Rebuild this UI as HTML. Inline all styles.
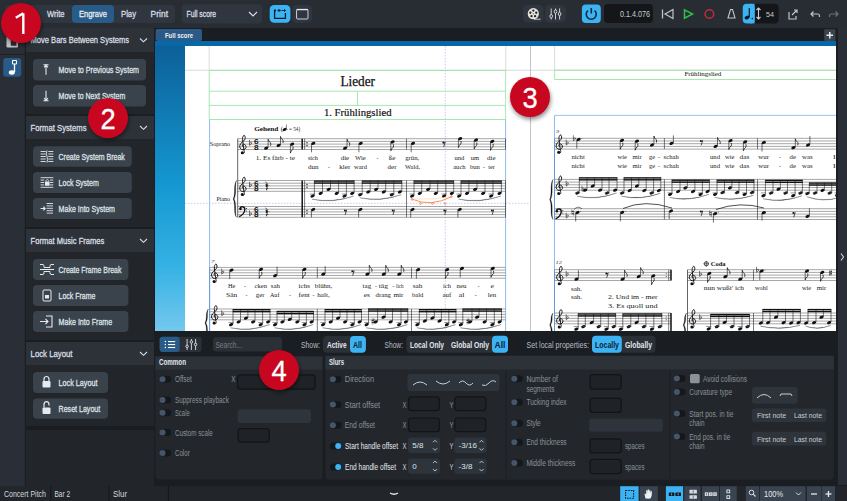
<!DOCTYPE html><html><head><meta charset="utf-8"><style>html,body{margin:0;padding:0;background:#1a1d21;overflow:hidden}svg{display:block}</style></head><body><svg width="847" height="501" viewBox="0 0 847 501"><defs><filter id="blur" x="-50%" y="-50%" width="200%" height="200%"><feGaussianBlur stdDeviation="2.2"/></filter></defs>
<rect x="0" y="0" width="847" height="501" rx="0" fill="#1a1d21" />
<rect x="0" y="0" width="847" height="28" rx="0" fill="#282c33" />
<rect x="5" y="5" width="170" height="18" rx="4" fill="#2f3640" />
<rect x="72" y="5" width="42" height="18" rx="4" fill="#285b88" />
<text x="47" y="17.2" font-family='"Liberation Sans",sans-serif' font-size="9.2" fill="#d9dee3" stroke="#d9dee3" stroke-width="0.3" textLength="17.60" lengthAdjust="spacingAndGlyphs" >Write</text>
<text x="79" y="17.2" font-family='"Liberation Sans",sans-serif' font-size="9.2" fill="#e8ecef" stroke="#e8ecef" stroke-width="0.3" textLength="28.00" lengthAdjust="spacingAndGlyphs" >Engrave</text>
<text x="121" y="17.2" font-family='"Liberation Sans",sans-serif' font-size="9.2" fill="#d9dee3" stroke="#d9dee3" stroke-width="0.3" textLength="15.00" lengthAdjust="spacingAndGlyphs" >Play</text>
<text x="150.6" y="17.2" font-family='"Liberation Sans",sans-serif' font-size="9.2" fill="#d9dee3" stroke="#d9dee3" stroke-width="0.3" textLength="17.40" lengthAdjust="spacingAndGlyphs" >Print</text>
<rect x="181.7" y="4.2" width="80.5" height="19.4" rx="4" fill="#2f3640" />
<text x="186.5" y="17" font-family='"Liberation Sans",sans-serif' font-size="9.2" fill="#d9dee3" stroke="#d9dee3" stroke-width="0.3" textLength="29.50" lengthAdjust="spacingAndGlyphs" >Full score</text>
<path d="M249,12 L253,16 L257,12" fill="none" stroke="#d9dee3" stroke-width="1.2" />
<rect x="269.7" y="5" width="20.7" height="17.7" rx="4.5" fill="#3cb4f3" />
<path d="M274.6,10.6 L274.6,18.4 L285.4,18.4 L285.4,13" fill="none" stroke="#0d1b26" stroke-width="1.3" />
<rect x="273.9" y="9.6" width="2.2" height="1.8" rx="0.6" fill="#0d1b26" />
<rect x="277.6" y="9.6" width="3" height="1.8" rx="0.6" fill="#0d1b26" />
<path d="M281.5,10.5 L285.5,10.5 M284.3,9.3 L285.5,10.5 L284.3,11.7" fill="none" stroke="#0d1b26" stroke-width="0.9" />
<rect x="292.2" y="5" width="19.8" height="17.7" rx="4.5" fill="#2f3640" />
<rect x="296.6" y="9.4" width="11.4" height="9.6" rx="1" fill="none" stroke="#cfd4d9" stroke-width="1"/>
<line x1="296.6" y1="9.6" x2="308" y2="9.6" stroke="#e6e9ec" stroke-width="1.3" />
<rect x="523" y="5" width="20.7" height="17.5" rx="4.5" fill="#2f3640" />
<circle cx="533.3" cy="13.7" r="5.6" fill="#e6e2dc" stroke="none" stroke-width="1" />
<circle cx="533.3" cy="10.6" r="1.15" fill="#1e2329" stroke="none" stroke-width="1" />
<circle cx="536.25" cy="12.75" r="1.15" fill="#1e2329" stroke="none" stroke-width="1" />
<circle cx="535.0999999999999" cy="16.2" r="1.15" fill="#1e2329" stroke="none" stroke-width="1" />
<circle cx="531.5" cy="16.2" r="1.15" fill="#1e2329" stroke="none" stroke-width="1" />
<circle cx="530.3499999999999" cy="12.75" r="1.15" fill="#1e2329" stroke="none" stroke-width="1" />
<circle cx="533.3" cy="13.7" r="0.5" fill="#1e2329" stroke="none" stroke-width="1" />
<line x1="534" y1="19.2" x2="540.5" y2="19.2" stroke="#e6e2dc" stroke-width="0.9" />
<rect x="545" y="5" width="20.8" height="17.5" rx="4.5" fill="#2f3640" />
<line x1="551.2" y1="8.5" x2="551.2" y2="19.5" stroke="#e6e2dc" stroke-width="0.9" />
<ellipse cx="551.2" cy="16.2" rx="1.3" ry="1.7" fill="#2e343b" stroke="#e6e2dc" stroke-width="0.9"/>
<line x1="555.5" y1="8.5" x2="555.5" y2="19.5" stroke="#e6e2dc" stroke-width="0.9" />
<ellipse cx="555.5" cy="11.6" rx="1.3" ry="1.7" fill="#2e343b" stroke="#e6e2dc" stroke-width="0.9"/>
<line x1="559.6" y1="8.5" x2="559.6" y2="19.5" stroke="#e6e2dc" stroke-width="0.9" />
<ellipse cx="559.6" cy="14" rx="1.3" ry="1.7" fill="#2e343b" stroke="#e6e2dc" stroke-width="0.9"/>
<rect x="581.9" y="4.6" width="18.9" height="18.4" rx="4" fill="#3cb4f3" />
<path d="M588,10.5 A5,5 0 1 0 594.5,10.5" fill="none" stroke="#0f2a40" stroke-width="1.6" />
<line x1="591.3" y1="8" x2="591.3" y2="13.5" stroke="#0f2a40" stroke-width="1.6" />
<rect x="604" y="4" width="49" height="19" rx="4" fill="#141619" />
<text x="620" y="16.7" font-family='"Liberation Sans",sans-serif' font-size="8.5" fill="#c8ced4" textLength="30.00" lengthAdjust="spacingAndGlyphs" >0.1.4.076</text>
<line x1="662.5" y1="9.5" x2="662.5" y2="18.5" stroke="#c0c5ca" stroke-width="1.3" />
<path d="M673,9.5 L665,14 L673,18.5 Z" fill="none" stroke="#c0c5ca" stroke-width="1.2" />
<path d="M684.5,9.8 L692.5,14 L684.5,18.2 Z" fill="none" stroke="#2fc24a" stroke-width="1.5" />
<circle cx="709.4" cy="14" r="4.3" fill="none" stroke="#c62b35" stroke-width="1.5" />
<path d="M728,18 L730.5,9.5 L732.5,9.5 L735,18 Z" fill="none" stroke="#c0c5ca" stroke-width="1.1" />
<rect x="742.7" y="3.8" width="36" height="19.6" rx="4" fill="#141619" />
<rect x="742.7" y="3.8" width="11.9" height="19.6" rx="4" fill="#3cb4f3" />
<rect x="750" y="3.8" width="4.6" height="19.6" rx="0" fill="#3cb4f3" />
<path d="M749.3,8 L749.3,17.2" fill="none" stroke="#0d1b26" stroke-width="1.2" />
<ellipse cx="747" cy="17.6" rx="2.5" ry="1.8" transform="rotate(-20 747 17.6)" fill="#0d1b26"/>
<circle cx="752.3" cy="18.6" r="0.8" fill="#0d1b26" stroke="none" stroke-width="1" />
<line x1="758.5" y1="8" x2="758.5" y2="19" stroke="#c8ced4" stroke-width="1.1" />
<path d="M756.5,10 L758.5,8 L760.5,10 M756.5,17 L758.5,19 L760.5,17" fill="none" stroke="#c8ced4" stroke-width="1.1" />
<text x="766" y="16.5" font-family='"Liberation Sans",sans-serif' font-size="8" fill="#c8ced4" textLength="8.00" lengthAdjust="spacingAndGlyphs" >54</text>
<path d="M789,12 L789,19 L796,19 L796,16" fill="none" stroke="#c0c5ca" stroke-width="1.2" />
<path d="M792,15 L797,10 M794,10 L797,10 L797,13" fill="none" stroke="#c0c5ca" stroke-width="1.2" />
<path d="M811,14 L818,14 Q819.5,14 819.5,16 L819.5,17 M813.5,11.5 L811,14 L813.5,16.5" fill="none" stroke="#c0c5ca" stroke-width="1.2" />
<path d="M838,14 L831,14 Q829.5,14 829.5,16 L829.5,17 M835.5,11.5 L838,14 L835.5,16.5" fill="none" stroke="#6c737a" stroke-width="1.2" />
<rect x="0" y="28" width="25" height="459" rx="0" fill="#2a2f37" />
<line x1="0" y1="54.4" x2="25" y2="54.4" stroke="#1d2125" stroke-width="1" />
<rect x="3.2" y="58" width="18" height="18.8" rx="3" fill="#285b88" />
<rect x="12.5" y="60.5" width="4" height="3.5" rx="0.5" fill="none" stroke="#fff" stroke-width="1.1"/>
<line x1="14.5" y1="64" x2="14.5" y2="72" stroke="#fff" stroke-width="1.3" />
<ellipse cx="11.8" cy="72.5" rx="3" ry="2.2" fill="#fff"/>
<rect x="6.5" y="36" width="11.5" height="11.5" rx="1.2" fill="#bfc3c7" />
<rect x="10.8" y="39.2" width="5.6" height="6.6" rx="0.5" fill="#2a2f37" />
<line x1="25.3" y1="28" x2="25.3" y2="487" stroke="#1b1e22" stroke-width="1" />
<rect x="26" y="28" width="128" height="459" rx="0" fill="#22262b" />
<rect x="26" y="28" width="128" height="24" rx="0" fill="#2d3239" />
<text x="30.6" y="43.2" font-family='"Liberation Sans",sans-serif' font-size="9.2" fill="#d9dee3" stroke="#d9dee3" stroke-width="0.3" textLength="98.40" lengthAdjust="spacingAndGlyphs" >Move Bars Between Systems</text>
<path d="M140,38.5 L143.5,41.8 L147,38.5" fill="none" stroke="#d9dee3" stroke-width="1.1" />
<rect x="33" y="59" width="113" height="21.599999999999994" rx="4" fill="#3a424b" />
<text x="58.6" y="73.1" font-family='"Liberation Sans",sans-serif' font-size="9.2" fill="#dfe3e7" stroke="#dfe3e7" stroke-width="0.3" textLength="80.40" lengthAdjust="spacingAndGlyphs" >Move to Previous System</text>
<line x1="46" y1="64.8" x2="46" y2="74.8" stroke="#e6eaee" stroke-width="1.1" />
<line x1="43.5" y1="64.8" x2="48.5" y2="64.8" stroke="#e6eaee" stroke-width="1.1" />
<path d="M44,67.3 L46,65.3 L48,67.3" fill="none" stroke="#e6eaee" stroke-width="1.1" />
<rect x="33" y="85" width="113" height="21.400000000000006" rx="4" fill="#3a424b" />
<text x="58.6" y="99.0" font-family='"Liberation Sans",sans-serif' font-size="9.2" fill="#dfe3e7" stroke="#dfe3e7" stroke-width="0.3" textLength="66.70" lengthAdjust="spacingAndGlyphs" >Move to Next System</text>
<line x1="46" y1="90.7" x2="46" y2="100.7" stroke="#e6eaee" stroke-width="1.1" />
<line x1="43.5" y1="100.7" x2="48.5" y2="100.7" stroke="#e6eaee" stroke-width="1.1" />
<path d="M44,98.2 L46,100.2 L48,98.2" fill="none" stroke="#e6eaee" stroke-width="1.1" />
<rect x="26" y="114" width="128" height="2" rx="0" fill="#1a1d21" />
<rect x="26" y="116" width="128" height="23" rx="0" fill="#2d3239" />
<text x="30.6" y="130.7" font-family='"Liberation Sans",sans-serif' font-size="9.2" fill="#d9dee3" stroke="#d9dee3" stroke-width="0.3" textLength="55.90" lengthAdjust="spacingAndGlyphs" >Format Systems</text>
<path d="M140,126.0 L143.5,129.3 L147,126.0" fill="none" stroke="#d9dee3" stroke-width="1.1" />
<rect x="33" y="146.3" width="98.80000000000001" height="20.399999999999977" rx="4" fill="#3a424b" />
<text x="58.6" y="159.8" font-family='"Liberation Sans",sans-serif' font-size="9.2" fill="#dfe3e7" stroke="#dfe3e7" stroke-width="0.3" textLength="66.20" lengthAdjust="spacingAndGlyphs" >Create System Break</text>
<line x1="40.6" y1="151.5" x2="45.8" y2="151.5" stroke="#e6eaee" stroke-width="0.9" />
<line x1="48.3" y1="151.5" x2="53.3" y2="151.5" stroke="#e6eaee" stroke-width="0.9" />
<line x1="40.6" y1="154.0" x2="45.8" y2="154.0" stroke="#e6eaee" stroke-width="0.9" />
<line x1="48.3" y1="154.0" x2="53.3" y2="154.0" stroke="#e6eaee" stroke-width="0.9" />
<line x1="40.6" y1="156.5" x2="45.8" y2="156.5" stroke="#e6eaee" stroke-width="0.9" />
<line x1="48.3" y1="156.5" x2="53.3" y2="156.5" stroke="#e6eaee" stroke-width="0.9" />
<line x1="40.6" y1="159.0" x2="45.8" y2="159.0" stroke="#e6eaee" stroke-width="0.9" />
<line x1="48.3" y1="159.0" x2="53.3" y2="159.0" stroke="#e6eaee" stroke-width="0.9" />
<line x1="40.6" y1="161.5" x2="45.8" y2="161.5" stroke="#e6eaee" stroke-width="0.9" />
<line x1="48.3" y1="161.5" x2="53.3" y2="161.5" stroke="#e6eaee" stroke-width="0.9" />
<path d="M47,150.5 Q45.8,153.5 47,156.5 Q48.2,159.5 47,162.5" fill="none" stroke="#e6eaee" stroke-width="0.9" />
<rect x="33" y="172" width="98.80000000000001" height="21" rx="4" fill="#3a424b" />
<text x="58.6" y="185.8" font-family='"Liberation Sans",sans-serif' font-size="9.2" fill="#dfe3e7" stroke="#dfe3e7" stroke-width="0.3" textLength="40.20" lengthAdjust="spacingAndGlyphs" >Lock System</text>
<line x1="40.6" y1="177.7" x2="53.3" y2="177.7" stroke="#e6eaee" stroke-width="0.9" />
<line x1="40.6" y1="180.1" x2="44.2" y2="180.1" stroke="#e6eaee" stroke-width="0.9" />
<line x1="50" y1="180.1" x2="53.3" y2="180.1" stroke="#e6eaee" stroke-width="0.9" />
<line x1="40.6" y1="182.5" x2="44.2" y2="182.5" stroke="#e6eaee" stroke-width="0.9" />
<line x1="50" y1="182.5" x2="53.3" y2="182.5" stroke="#e6eaee" stroke-width="0.9" />
<line x1="40.6" y1="184.9" x2="44.2" y2="184.9" stroke="#e6eaee" stroke-width="0.9" />
<line x1="50" y1="184.9" x2="53.3" y2="184.9" stroke="#e6eaee" stroke-width="0.9" />
<line x1="40.6" y1="187.3" x2="53.3" y2="187.3" stroke="#e6eaee" stroke-width="0.9" />
<rect x="45" y="181.5" width="4.6" height="4.2" rx="0.5" fill="#e6eaee" />
<path d="M45.9,181.5 L45.9,180.5 Q47.3,178.5 48.7,180.5 L48.7,181.5" fill="none" stroke="#e6eaee" stroke-width="0.8" />
<rect x="33" y="198" width="98.80000000000001" height="21" rx="4" fill="#3a424b" />
<text x="58.6" y="211.8" font-family='"Liberation Sans",sans-serif' font-size="9.2" fill="#dfe3e7" stroke="#dfe3e7" stroke-width="0.3" textLength="56.40" lengthAdjust="spacingAndGlyphs" >Make Into System</text>
<line x1="46.6" y1="203.5" x2="53" y2="203.5" stroke="#e6eaee" stroke-width="0.9" />
<line x1="46.6" y1="205.9" x2="53" y2="205.9" stroke="#e6eaee" stroke-width="0.9" />
<line x1="46.6" y1="208.3" x2="53" y2="208.3" stroke="#e6eaee" stroke-width="0.9" />
<line x1="46.6" y1="210.7" x2="53" y2="210.7" stroke="#e6eaee" stroke-width="0.9" />
<line x1="46.6" y1="213.1" x2="53" y2="213.1" stroke="#e6eaee" stroke-width="0.9" />
<path d="M40.6,208.5 L45.2,208.5 M43.4,206.7 L45.2,208.5 L43.4,210.3" fill="none" stroke="#e6eaee" stroke-width="1.1" />
<rect x="26" y="227" width="128" height="2" rx="0" fill="#1a1d21" />
<rect x="26" y="229" width="128" height="23" rx="0" fill="#2d3239" />
<text x="30.6" y="243.7" font-family='"Liberation Sans",sans-serif' font-size="9.2" fill="#d9dee3" stroke="#d9dee3" stroke-width="0.3" textLength="73.80" lengthAdjust="spacingAndGlyphs" >Format Music Frames</text>
<path d="M140,239.0 L143.5,242.3 L147,239.0" fill="none" stroke="#d9dee3" stroke-width="1.1" />
<rect x="33" y="259" width="95.4" height="21" rx="4" fill="#3a424b" />
<text x="58.6" y="272.8" font-family='"Liberation Sans",sans-serif' font-size="9.2" fill="#dfe3e7" stroke="#dfe3e7" stroke-width="0.3" textLength="62.80" lengthAdjust="spacingAndGlyphs" >Create Frame Break</text>
<path d="M40,264.5 L43,264.5 Q44,264.5 44,266.5 L44,267.5 L50,267.5 L50,266.5 Q50,264.5 51,264.5 L54,264.5" fill="none" stroke="#e6eaee" stroke-width="1" />
<path d="M40,274.5 L43,274.5 Q44,274.5 44,272.5 L44,271.5 L50,271.5 L50,272.5 Q50,274.5 51,274.5 L54,274.5" fill="none" stroke="#e6eaee" stroke-width="1" />
<line x1="40" y1="269.5" x2="54" y2="269.5" stroke="#e6eaee" stroke-width="1" />
<rect x="33" y="285" width="95.4" height="21" rx="4" fill="#3a424b" />
<text x="58.6" y="298.8" font-family='"Liberation Sans",sans-serif' font-size="9.2" fill="#dfe3e7" stroke="#dfe3e7" stroke-width="0.3" textLength="36.80" lengthAdjust="spacingAndGlyphs" >Lock Frame</text>
<rect x="43" y="290.0" width="8" height="11" rx="1" fill="none" stroke="#e6eaee" stroke-width="1"/>
<rect x="45" y="295.0" width="4" height="3.5" rx="0" fill="#e6eaee" />
<rect x="33" y="311" width="95.4" height="21" rx="4" fill="#3a424b" />
<text x="58.6" y="324.8" font-family='"Liberation Sans",sans-serif' font-size="9.2" fill="#dfe3e7" stroke="#dfe3e7" stroke-width="0.3" textLength="53.60" lengthAdjust="spacingAndGlyphs" >Make Into Frame</text>
<path d="M46,316.0 L52,316.0 L52,327.0 L46,327.0" fill="none" stroke="#e6eaee" stroke-width="1.1" />
<path d="M40,321.5 L48,321.5 M45.5,319.0 L48,321.5 L45.5,324.0" fill="none" stroke="#e6eaee" stroke-width="1.1" />
<rect x="26" y="340" width="128" height="2" rx="0" fill="#1a1d21" />
<rect x="26" y="342" width="128" height="23" rx="0" fill="#2d3239" />
<text x="30.6" y="356.7" font-family='"Liberation Sans",sans-serif' font-size="9.2" fill="#d9dee3" stroke="#d9dee3" stroke-width="0.3" textLength="41.90" lengthAdjust="spacingAndGlyphs" >Lock Layout</text>
<path d="M140,352.0 L143.5,355.3 L147,352.0" fill="none" stroke="#d9dee3" stroke-width="1.1" />
<rect x="33" y="372" width="75" height="21" rx="4" fill="#3a424b" />
<text x="58.6" y="385.8" font-family='"Liberation Sans",sans-serif' font-size="9.2" fill="#dfe3e7" stroke="#dfe3e7" stroke-width="0.3" textLength="38.80" lengthAdjust="spacingAndGlyphs" >Lock Layout</text>
<rect x="42.5" y="381.0" width="8" height="6.5" rx="1" fill="#e6eaee" />
<path d="M44,381.0 L44,379.5 Q44,376.5 46.5,376.5 Q49,376.5 49,379.5 L49,381.0" fill="none" stroke="#e6eaee" stroke-width="1.2" />
<rect x="33" y="398.4" width="75" height="20.400000000000034" rx="4" fill="#3a424b" />
<text x="58.6" y="411.90000000000003" font-family='"Liberation Sans",sans-serif' font-size="9.2" fill="#dfe3e7" stroke="#dfe3e7" stroke-width="0.3" textLength="41.60" lengthAdjust="spacingAndGlyphs" >Reset Layout</text>
<rect x="42.5" y="407.6" width="8" height="6.5" rx="1" fill="#e6eaee" />
<path d="M44,407.6 L44,404.6 Q44,401.6 46.5,401.6 Q49,401.6 49,404.6 L49,405.6" fill="none" stroke="#e6eaee" stroke-width="1.2" />
<rect x="26" y="426" width="128" height="2" rx="0" fill="#1a1d21" />
<rect x="26" y="426" width="128" height="4" rx="0" fill="#1a1d21" />
<rect x="154" y="28" width="693" height="13" rx="0" fill="#1a1d21" />
<rect x="155.6" y="29" width="46.4" height="12" rx="2" fill="#2b5a87" />
<text x="165" y="38.2" font-family='"Liberation Sans",sans-serif' font-size="8" fill="#eef2f5" font-weight="bold" textLength="28.00" lengthAdjust="spacingAndGlyphs" >Full score</text>
<rect x="824.2" y="29.3" width="11.3" height="11.7" rx="1" fill="#3a424b" />
<path d="M826.5,35.2 L833,35.2 M829.8,32 L829.8,38.5" fill="none" stroke="#e6eaee" stroke-width="1.5" />
<defs><linearGradient id="sg" x1="0" y1="0" x2="0" y2="1"><stop offset="0" stop-color="#0c5e96"/><stop offset="0.5" stop-color="#1598d2"/><stop offset="0.78" stop-color="#35b2e4"/><stop offset="1" stop-color="#74c8ee"/></linearGradient></defs>
<rect x="155" y="41" width="681" height="290" rx="0" fill="url(#sg)" />
<rect x="155" y="41" width="681" height="5" rx="0" fill="#0867a6" />
<rect x="185" y="46" width="651" height="285" rx="0" fill="#ffffff" />
<g><line x1="185.00" y1="70.30" x2="836.00" y2="70.30" stroke="#d2d2d2" stroke-width="0.8" />
<line x1="209.20" y1="46.00" x2="209.20" y2="70.30" stroke="#d2d2d2" stroke-width="0.8" />
<line x1="505.80" y1="46.00" x2="505.80" y2="70.30" stroke="#d2d2d2" stroke-width="0.8" />
<line x1="554.60" y1="46.00" x2="554.60" y2="70.30" stroke="#d2d2d2" stroke-width="0.8" />
<line x1="530.50" y1="46.00" x2="530.50" y2="331.00" stroke="#c4c4c4" stroke-width="1" />
<line x1="209.20" y1="70.40" x2="505.60" y2="70.40" stroke="#8fe39b" stroke-width="0.8" />
<line x1="209.20" y1="91.20" x2="505.60" y2="91.20" stroke="#8fe39b" stroke-width="0.8" />
<line x1="209.20" y1="105.40" x2="505.60" y2="105.40" stroke="#8fe39b" stroke-width="0.8" />
<line x1="209.20" y1="119.50" x2="505.60" y2="119.50" stroke="#8fe39b" stroke-width="0.8" />
<line x1="209.20" y1="70.40" x2="209.20" y2="119.50" stroke="#8fe39b" stroke-width="0.8" />
<line x1="505.60" y1="70.40" x2="505.60" y2="119.50" stroke="#8fe39b" stroke-width="0.8" />
<line x1="357.50" y1="91.20" x2="357.50" y2="105.40" stroke="#8fe39b" stroke-width="0.8" />
<line x1="554.60" y1="70.20" x2="836.00" y2="70.20" stroke="#8fe39b" stroke-width="0.8" />
<line x1="554.60" y1="79.50" x2="836.00" y2="79.50" stroke="#8fe39b" stroke-width="0.8" />
<line x1="554.60" y1="70.20" x2="554.60" y2="79.50" stroke="#8fe39b" stroke-width="0.8" />
<line x1="209.60" y1="119.50" x2="209.60" y2="331.00" stroke="#8cbdf0" stroke-width="1" />
<line x1="505.60" y1="119.50" x2="505.60" y2="331.00" stroke="#8cbdf0" stroke-width="1" />
<line x1="554.50" y1="115.40" x2="836.00" y2="115.40" stroke="#8cbdf0" stroke-width="0.9" />
<line x1="554.50" y1="115.40" x2="554.50" y2="331.00" stroke="#8cbdf0" stroke-width="1" />
<line x1="445.3" y1="46" x2="445.3" y2="331" stroke="#b4b4e6" stroke-width="0.7" stroke-dasharray="1.5,1.5"/>
<line x1="185" y1="203.3" x2="530" y2="203.3" stroke="#b4b4e6" stroke-width="0.7" stroke-dasharray="1.5,1.5"/>
<text x="340.50" y="85.50" font-family='"Liberation Serif",serif' font-size="13.6" fill="#111111" textLength="34.50" lengthAdjust="spacingAndGlyphs" stroke="#111" stroke-width="0.25">Lieder</text>
<text x="323.90" y="116.30" font-family='"Liberation Serif",serif' font-size="11" fill="#111111" textLength="67.60" lengthAdjust="spacingAndGlyphs" stroke="#111" stroke-width="0.2">1. Frühlingslied</text>
<text x="684.40" y="76.40" font-family='"Liberation Serif",serif' font-size="6.3" fill="#111111" textLength="36.90" lengthAdjust="spacingAndGlyphs" >Frühlingslied</text>
<line x1="237.70" y1="138.70" x2="505.50" y2="138.70" stroke="#6a6a6a" stroke-width="0.6" />
<line x1="237.70" y1="141.40" x2="505.50" y2="141.40" stroke="#6a6a6a" stroke-width="0.6" />
<line x1="237.70" y1="144.10" x2="505.50" y2="144.10" stroke="#6a6a6a" stroke-width="0.6" />
<line x1="237.70" y1="146.80" x2="505.50" y2="146.80" stroke="#6a6a6a" stroke-width="0.6" />
<line x1="237.70" y1="149.50" x2="505.50" y2="149.50" stroke="#6a6a6a" stroke-width="0.6" />
<line x1="237.70" y1="180.50" x2="505.50" y2="180.50" stroke="#6a6a6a" stroke-width="0.6" />
<line x1="237.70" y1="183.20" x2="505.50" y2="183.20" stroke="#6a6a6a" stroke-width="0.6" />
<line x1="237.70" y1="185.90" x2="505.50" y2="185.90" stroke="#6a6a6a" stroke-width="0.6" />
<line x1="237.70" y1="188.60" x2="505.50" y2="188.60" stroke="#6a6a6a" stroke-width="0.6" />
<line x1="237.70" y1="191.30" x2="505.50" y2="191.30" stroke="#6a6a6a" stroke-width="0.6" />
<line x1="237.70" y1="206.50" x2="505.50" y2="206.50" stroke="#6a6a6a" stroke-width="0.6" />
<line x1="237.70" y1="209.20" x2="505.50" y2="209.20" stroke="#6a6a6a" stroke-width="0.6" />
<line x1="237.70" y1="211.90" x2="505.50" y2="211.90" stroke="#6a6a6a" stroke-width="0.6" />
<line x1="237.70" y1="214.60" x2="505.50" y2="214.60" stroke="#6a6a6a" stroke-width="0.6" />
<line x1="237.70" y1="217.30" x2="505.50" y2="217.30" stroke="#6a6a6a" stroke-width="0.6" />
<line x1="237.70" y1="138.70" x2="237.70" y2="217.30" stroke="#222" stroke-width="0.7" />
<path d="M236.50,180.50 C233.00,185.50 236.00,192.90 233.20,198.90 C236.00,204.90 233.00,212.30 236.50,217.30 C234.50,212.30 237.10,204.90 234.10,198.90 C237.10,192.90 234.50,185.50 236.50,180.50 Z" fill="#111111" stroke="#111111" stroke-width="0.3"/>
<text x="209.80" y="146.20" font-family='"Liberation Serif",serif' font-size="5.6" fill="#222" textLength="20.40" lengthAdjust="spacingAndGlyphs" >Soprano</text>
<text x="216.50" y="200.60" font-family='"Liberation Serif",serif' font-size="5.6" fill="#222" textLength="13.50" lengthAdjust="spacingAndGlyphs" >Piano</text>
<text x="254.20" y="130.60" font-family='"Liberation Serif",serif' font-size="6.6" fill="#111111" font-weight="bold" textLength="24.20" lengthAdjust="spacingAndGlyphs" >Gehend</text>
<text x="280.80" y="130.60" font-family='"Liberation Serif",serif' font-size="5.6" fill="#222" textLength="2.20" lengthAdjust="spacingAndGlyphs" >(</text>
<ellipse cx="284.60" cy="129.50" rx="2.15" ry="1.45" transform="rotate(-22 284.60 129.50)" fill="#111111"/>
<line x1="286.40" y1="129.30" x2="286.40" y2="124.50" stroke="#111111" stroke-width="0.5" />
<circle cx="287.6" cy="129.3" r="0.4" fill="#111"/>
<text x="289.00" y="130.60" font-family='"Liberation Serif",serif' font-size="5.6" fill="#222" textLength="11.20" lengthAdjust="spacingAndGlyphs" >= 54)</text>
<path d="M243.53,147.21 C243.32,146.98 242.31,146.34 242.29,145.84 C242.27,145.33 242.87,144.28 243.39,144.18 C243.92,144.09 245.02,144.71 245.46,145.29 C245.89,145.86 246.24,146.91 246.01,147.63 C245.78,148.34 244.86,149.28 244.08,149.55 C243.30,149.83 242.06,149.74 241.33,149.28 C240.59,148.82 239.77,147.76 239.68,146.80 C239.58,145.84 240.13,144.46 240.78,143.50 C241.42,142.53 242.80,141.84 243.53,141.02 C244.27,140.19 244.95,139.34 245.18,138.54 C245.41,137.73 245.09,136.75 244.91,136.20 C244.72,135.65 244.40,135.16 244.08,135.23 C243.76,135.30 243.23,135.92 242.98,136.61 C242.73,137.30 242.43,137.30 242.57,139.36 C242.70,141.43 243.51,146.89 243.81,149.00 C244.10,151.11 244.38,151.30 244.36,152.03 C244.33,152.77 244.04,153.20 243.67,153.41 C243.30,153.62 242.41,153.29 242.15,153.27 " fill="none" stroke="#111111" stroke-width="0.95"/>
<circle cx="242.29" cy="152.72" r="1.51" fill="#111111"/>
<path d="M249.50,139.90 L249.50,145.40 Q252.10,143.90 251.70,142.70 Q251.10,141.80 249.50,143.20" fill="none" stroke="#111111" stroke-width="0.55"/>
<text x="254.00" y="144.10" font-family='"Liberation Sans",sans-serif' font-weight="bold" font-size="7.6" fill="#111111" textLength="4.6" lengthAdjust="spacingAndGlyphs">6</text>
<text x="254.00" y="149.60" font-family='"Liberation Sans",sans-serif' font-weight="bold" font-size="7.6" fill="#111111" textLength="4.6" lengthAdjust="spacingAndGlyphs">8</text>
<path d="M243.53,189.01 C243.32,188.78 242.31,188.14 242.29,187.64 C242.27,187.13 242.87,186.08 243.39,185.98 C243.92,185.89 245.02,186.51 245.46,187.09 C245.89,187.66 246.24,188.71 246.01,189.43 C245.78,190.14 244.86,191.08 244.08,191.35 C243.30,191.63 242.06,191.54 241.33,191.08 C240.59,190.62 239.77,189.56 239.68,188.60 C239.58,187.64 240.13,186.26 240.78,185.30 C241.42,184.33 242.80,183.64 243.53,182.82 C244.27,181.99 244.95,181.14 245.18,180.34 C245.41,179.53 245.09,178.55 244.91,178.00 C244.72,177.45 244.40,176.96 244.08,177.03 C243.76,177.10 243.23,177.72 242.98,178.41 C242.73,179.10 242.43,179.10 242.57,181.16 C242.70,183.23 243.51,188.69 243.81,190.80 C244.10,192.91 244.38,193.10 244.36,193.83 C244.33,194.57 244.04,195.00 243.67,195.21 C243.30,195.42 242.41,195.09 242.15,195.07 " fill="none" stroke="#111111" stroke-width="0.95"/>
<circle cx="242.29" cy="194.52" r="1.51" fill="#111111"/>
<path d="M249.50,181.70 L249.50,187.20 Q252.10,185.70 251.70,184.50 Q251.10,183.60 249.50,185.00" fill="none" stroke="#111111" stroke-width="0.55"/>
<text x="254.00" y="185.90" font-family='"Liberation Sans",sans-serif' font-weight="bold" font-size="7.6" fill="#111111" textLength="4.6" lengthAdjust="spacingAndGlyphs">6</text>
<text x="254.00" y="191.40" font-family='"Liberation Sans",sans-serif' font-weight="bold" font-size="7.6" fill="#111111" textLength="4.6" lengthAdjust="spacingAndGlyphs">8</text>
<path d="M239.80,208.70 C240.70,205.90 245.20,206.10 244.80,209.70 C244.50,213.00 241.70,215.50 239.20,216.70" fill="none" stroke="#111111" stroke-width="1.35"/>
<circle cx="240.50" cy="209.10" r="1.25" fill="#111111"/>
<circle cx="246.40" cy="208.40" r="0.5" fill="#111111"/>
<circle cx="246.40" cy="210.90" r="0.5" fill="#111111"/>
<path d="M249.50,210.40 L249.50,215.90 Q252.10,214.40 251.70,213.20 Q251.10,212.30 249.50,213.70" fill="none" stroke="#111111" stroke-width="0.55"/>
<text x="254.00" y="211.90" font-family='"Liberation Sans",sans-serif' font-weight="bold" font-size="7.6" fill="#111111" textLength="4.6" lengthAdjust="spacingAndGlyphs">6</text>
<text x="254.00" y="217.40" font-family='"Liberation Sans",sans-serif' font-weight="bold" font-size="7.6" fill="#111111" textLength="4.6" lengthAdjust="spacingAndGlyphs">8</text>
<line x1="302.20" y1="138.70" x2="302.20" y2="149.50" stroke="#111111" stroke-width="1.5" />
<line x1="304.60" y1="138.70" x2="304.60" y2="149.50" stroke="#111111" stroke-width="0.55" />
<line x1="302.20" y1="180.50" x2="302.20" y2="217.30" stroke="#111111" stroke-width="1.5" />
<line x1="304.60" y1="180.50" x2="304.60" y2="217.30" stroke="#111111" stroke-width="0.55" />
<circle cx="307" cy="142.75" r="0.7" fill="#111111"/><circle cx="307" cy="145.45" r="0.7" fill="#111111"/>
<circle cx="307" cy="184.55" r="0.7" fill="#111111"/><circle cx="307" cy="187.25" r="0.7" fill="#111111"/>
<circle cx="307" cy="210.55" r="0.7" fill="#111111"/><circle cx="307" cy="213.25" r="0.7" fill="#111111"/>
<line x1="406.50" y1="138.70" x2="406.50" y2="149.50" stroke="#222" stroke-width="0.6" />
<line x1="406.50" y1="180.50" x2="406.50" y2="217.30" stroke="#222" stroke-width="0.6" />
<line x1="505.50" y1="138.70" x2="505.50" y2="149.50" stroke="#222" stroke-width="0.6" />
<line x1="505.50" y1="180.50" x2="505.50" y2="217.30" stroke="#222" stroke-width="0.6" />
<ellipse cx="266.20" cy="148.10" rx="2.15" ry="1.45" transform="rotate(-22 266.20 148.10)" fill="#111111"/>
<line x1="268.10" y1="147.80" x2="268.10" y2="139.10" stroke="#111111" stroke-width="0.6" />
<path d="M268.10,139.10 q0.5,2.4 2.3,3.6 q0.8,1.2 0.2,3" fill="none" stroke="#111111" stroke-width="0.8"/>
<ellipse cx="278.60" cy="145.40" rx="2.15" ry="1.45" transform="rotate(-22 278.60 145.40)" fill="#111111"/>
<line x1="280.50" y1="145.10" x2="280.50" y2="136.40" stroke="#111111" stroke-width="0.6" />
<path d="M280.50,136.40 q0.5,2.4 2.3,3.6 q0.8,1.2 0.2,3" fill="none" stroke="#111111" stroke-width="0.8"/>
<ellipse cx="292.20" cy="144.10" rx="2.15" ry="1.45" transform="rotate(-22 292.20 144.10)" fill="#111111"/>
<line x1="290.40" y1="144.40" x2="290.40" y2="153.10" stroke="#111111" stroke-width="0.6" />
<path d="M290.40,153.10 q0.5,-2.4 2.3,-3.6 q0.8,-1.2 0.2,-3" fill="none" stroke="#111111" stroke-width="0.8"/>
<ellipse cx="313.30" cy="143.30" rx="2.15" ry="1.45" transform="rotate(-22 313.30 143.30)" fill="#111111"/>
<line x1="311.50" y1="143.60" x2="311.50" y2="152.30" stroke="#111111" stroke-width="0.6" />
<ellipse cx="345.10" cy="148.10" rx="2.15" ry="1.45" transform="rotate(-22 345.10 148.10)" fill="#111111"/>
<line x1="347.00" y1="147.80" x2="347.00" y2="139.10" stroke="#111111" stroke-width="0.6" />
<path d="M347.00,139.10 q0.5,2.4 2.3,3.6 q0.8,1.2 0.2,3" fill="none" stroke="#111111" stroke-width="0.8"/>
<ellipse cx="360.70" cy="143.30" rx="2.15" ry="1.45" transform="rotate(-22 360.70 143.30)" fill="#111111"/>
<line x1="358.90" y1="143.60" x2="358.90" y2="152.30" stroke="#111111" stroke-width="0.6" />
<ellipse cx="392.60" cy="141.90" rx="2.15" ry="1.45" transform="rotate(-22 392.60 141.90)" fill="#111111"/>
<line x1="390.80" y1="142.20" x2="390.80" y2="150.90" stroke="#111111" stroke-width="0.6" />
<path d="M390.80,150.90 q0.5,-2.4 2.3,-3.6 q0.8,-1.2 0.2,-3" fill="none" stroke="#111111" stroke-width="0.8"/>
<ellipse cx="413.00" cy="143.30" rx="2.15" ry="1.45" transform="rotate(-22 413.00 143.30)" fill="#111111"/>
<line x1="411.20" y1="143.60" x2="411.20" y2="152.30" stroke="#111111" stroke-width="0.6" />
<circle cx="443.30" cy="142.50" r="0.9" fill="#111111"/>
<path d="M442.80,142.90 Q444.30,143.50 445.20,142.00 L443.70,146.90" fill="none" stroke="#111111" stroke-width="0.75"/>
<ellipse cx="460.20" cy="138.60" rx="2.15" ry="1.45" transform="rotate(-22 460.20 138.60)" fill="#111111"/>
<line x1="458.40" y1="138.90" x2="458.40" y2="147.60" stroke="#111111" stroke-width="0.6" />
<path d="M458.40,147.60 q0.5,-2.4 2.3,-3.6 q0.8,-1.2 0.2,-3" fill="none" stroke="#111111" stroke-width="0.8"/>
<ellipse cx="476.00" cy="140.00" rx="2.15" ry="1.45" transform="rotate(-22 476.00 140.00)" fill="#111111"/>
<line x1="474.20" y1="140.30" x2="474.20" y2="149.00" stroke="#111111" stroke-width="0.6" />
<path d="M474.20,149.00 q0.5,-2.4 2.3,-3.6 q0.8,-1.2 0.2,-3" fill="none" stroke="#111111" stroke-width="0.8"/>
<ellipse cx="492.30" cy="141.40" rx="2.15" ry="1.45" transform="rotate(-22 492.30 141.40)" fill="#111111"/>
<line x1="490.50" y1="141.70" x2="490.50" y2="150.40" stroke="#111111" stroke-width="0.6" />
<path d="M490.50,150.40 q0.5,-2.4 2.3,-3.6 q0.8,-1.2 0.2,-3" fill="none" stroke="#111111" stroke-width="0.8"/>
<text x="255.70" y="159.80" font-family='"Liberation Serif",serif' font-size="6.6" fill="#222" textLength="39.30" lengthAdjust="spacingAndGlyphs">1. Es  färb - te</text>
<text x="307.90" y="159.80" font-family='"Liberation Serif",serif' font-size="6.6" fill="#222" textLength="10.10" lengthAdjust="spacingAndGlyphs">sich</text>
<text x="340.70" y="159.80" font-family='"Liberation Serif",serif' font-size="6.6" fill="#222" textLength="8.50" lengthAdjust="spacingAndGlyphs">die</text>
<text x="355.10" y="159.80" font-family='"Liberation Serif",serif' font-size="6.6" fill="#222" textLength="10.70" lengthAdjust="spacingAndGlyphs">Wie</text>
<text x="376.50" y="159.80" font-family='"Liberation Serif",serif' font-size="6.6" fill="#222" textLength="2.00" lengthAdjust="spacingAndGlyphs">-</text>
<text x="388.80" y="159.80" font-family='"Liberation Serif",serif' font-size="6.6" fill="#222" textLength="6.70" lengthAdjust="spacingAndGlyphs">ße</text>
<text x="405.20" y="159.80" font-family='"Liberation Serif",serif' font-size="6.6" fill="#222" textLength="14.00" lengthAdjust="spacingAndGlyphs">grün,</text>
<text x="454.50" y="159.80" font-family='"Liberation Serif",serif' font-size="6.6" fill="#222" textLength="9.80" lengthAdjust="spacingAndGlyphs">und</text>
<text x="470.80" y="159.80" font-family='"Liberation Serif",serif' font-size="6.6" fill="#222" textLength="8.40" lengthAdjust="spacingAndGlyphs">um</text>
<text x="487.00" y="159.80" font-family='"Liberation Serif",serif' font-size="6.6" fill="#222" textLength="8.50" lengthAdjust="spacingAndGlyphs">die</text>
<text x="307.90" y="168.80" font-family='"Liberation Serif",serif' font-size="6.6" fill="#222" textLength="10.60" lengthAdjust="spacingAndGlyphs">dun</text>
<text x="328.00" y="168.80" font-family='"Liberation Serif",serif' font-size="6.6" fill="#222" textLength="2.00" lengthAdjust="spacingAndGlyphs">-</text>
<text x="339.20" y="168.80" font-family='"Liberation Serif",serif' font-size="6.6" fill="#222" textLength="11.20" lengthAdjust="spacingAndGlyphs">kler</text>
<text x="354.00" y="168.80" font-family='"Liberation Serif",serif' font-size="6.6" fill="#222" textLength="13.00" lengthAdjust="spacingAndGlyphs">ward</text>
<text x="387.60" y="168.80" font-family='"Liberation Serif",serif' font-size="6.6" fill="#222" textLength="8.90" lengthAdjust="spacingAndGlyphs">der</text>
<text x="405.00" y="168.80" font-family='"Liberation Serif",serif' font-size="6.6" fill="#222" textLength="15.00" lengthAdjust="spacingAndGlyphs">Wald,</text>
<text x="453.20" y="168.80" font-family='"Liberation Serif",serif' font-size="6.6" fill="#222" textLength="12.40" lengthAdjust="spacingAndGlyphs">auch</text>
<text x="470.00" y="168.80" font-family='"Liberation Serif",serif' font-size="6.6" fill="#222" textLength="9.90" lengthAdjust="spacingAndGlyphs">bun</text>
<text x="483.00" y="168.80" font-family='"Liberation Serif",serif' font-size="6.6" fill="#222" textLength="2.00" lengthAdjust="spacingAndGlyphs">-</text>
<text x="488.30" y="168.80" font-family='"Liberation Serif",serif' font-size="6.6" fill="#222" textLength="6.50" lengthAdjust="spacingAndGlyphs">ter</text>
<path d="M265.48,181.72 L267.63,184.15 L266.15,186.31 L267.91,188.60" fill="none" stroke="#111111" stroke-width="0.75" stroke-linejoin="round"/>
<path d="M265.75,184.28 L267.37,185.90 L266.29,186.84" fill="none" stroke="#111111" stroke-width="1.3"/>
<path d="M267.91,188.60 Q265.34,187.79 266.69,190.36" fill="none" stroke="#111111" stroke-width="0.8"/>
<circle cx="269" cy="185.40" r="0.45" fill="#111111"/>
<path d="M265.48,207.72 L267.63,210.15 L266.15,212.31 L267.91,214.60" fill="none" stroke="#111111" stroke-width="0.75" stroke-linejoin="round"/>
<path d="M265.75,210.28 L267.37,211.90 L266.29,212.84" fill="none" stroke="#111111" stroke-width="1.3"/>
<path d="M267.91,214.60 Q265.34,213.79 266.69,216.36" fill="none" stroke="#111111" stroke-width="0.8"/>
<circle cx="269" cy="211.40" r="0.45" fill="#111111"/>
<ellipse cx="312.50" cy="196.00" rx="2.15" ry="1.45" transform="rotate(-22 312.50 196.00)" fill="#111111"/>
<line x1="314.40" y1="195.80" x2="314.40" y2="180.70" stroke="#111111" stroke-width="0.55" />
<line x1="309.90" y1="194.00" x2="315.10" y2="194.00" stroke="#444" stroke-width="0.55" />
<ellipse cx="320.60" cy="193.30" rx="2.15" ry="1.45" transform="rotate(-22 320.60 193.30)" fill="#111111"/>
<line x1="322.50" y1="193.10" x2="322.50" y2="180.70" stroke="#111111" stroke-width="0.55" />
<ellipse cx="328.60" cy="189.30" rx="2.15" ry="1.45" transform="rotate(-22 328.60 189.30)" fill="#111111"/>
<line x1="330.50" y1="189.10" x2="330.50" y2="180.70" stroke="#111111" stroke-width="0.55" />
<ellipse cx="336.70" cy="193.30" rx="2.15" ry="1.45" transform="rotate(-22 336.70 193.30)" fill="#111111"/>
<line x1="338.60" y1="193.10" x2="338.60" y2="180.70" stroke="#111111" stroke-width="0.55" />
<ellipse cx="344.50" cy="196.00" rx="2.15" ry="1.45" transform="rotate(-22 344.50 196.00)" fill="#111111"/>
<line x1="346.40" y1="195.80" x2="346.40" y2="180.70" stroke="#111111" stroke-width="0.55" />
<line x1="341.90" y1="194.00" x2="347.10" y2="194.00" stroke="#444" stroke-width="0.55" />
<ellipse cx="352.20" cy="193.30" rx="2.15" ry="1.45" transform="rotate(-22 352.20 193.30)" fill="#111111"/>
<line x1="354.10" y1="193.10" x2="354.10" y2="180.70" stroke="#111111" stroke-width="0.55" />
<rect x="314.10" y="180.40" width="40.30" height="1.4" fill="#111111"/>
<rect x="314.10" y="182.35" width="40.30" height="1.4" fill="#111111"/>
<path d="M312.00,199.20 Q332.35,203.70 353.70,196.10 Q332.35,203.00 312.00,199.20 Z" fill="#222" stroke="#222" stroke-width="0.25"/>
<ellipse cx="360.30" cy="194.60" rx="2.15" ry="1.45" transform="rotate(-22 360.30 194.60)" fill="#111111"/>
<line x1="362.20" y1="194.40" x2="362.20" y2="180.70" stroke="#111111" stroke-width="0.55" />
<line x1="357.70" y1="194.00" x2="362.90" y2="194.00" stroke="#444" stroke-width="0.55" />
<ellipse cx="368.30" cy="191.90" rx="2.15" ry="1.45" transform="rotate(-22 368.30 191.90)" fill="#111111"/>
<line x1="370.20" y1="191.70" x2="370.20" y2="180.70" stroke="#111111" stroke-width="0.55" />
<ellipse cx="376.10" cy="189.30" rx="2.15" ry="1.45" transform="rotate(-22 376.10 189.30)" fill="#111111"/>
<line x1="378.00" y1="189.10" x2="378.00" y2="180.70" stroke="#111111" stroke-width="0.55" />
<ellipse cx="383.80" cy="191.90" rx="2.15" ry="1.45" transform="rotate(-22 383.80 191.90)" fill="#111111"/>
<line x1="385.70" y1="191.70" x2="385.70" y2="180.70" stroke="#111111" stroke-width="0.55" />
<ellipse cx="391.90" cy="194.60" rx="2.15" ry="1.45" transform="rotate(-22 391.90 194.60)" fill="#111111"/>
<line x1="393.80" y1="194.40" x2="393.80" y2="180.70" stroke="#111111" stroke-width="0.55" />
<line x1="389.30" y1="194.00" x2="394.50" y2="194.00" stroke="#444" stroke-width="0.55" />
<ellipse cx="399.90" cy="191.90" rx="2.15" ry="1.45" transform="rotate(-22 399.90 191.90)" fill="#111111"/>
<line x1="401.80" y1="191.70" x2="401.80" y2="180.70" stroke="#111111" stroke-width="0.55" />
<rect x="361.90" y="180.40" width="40.20" height="1.4" fill="#111111"/>
<rect x="361.90" y="182.35" width="40.20" height="1.4" fill="#111111"/>
<path d="M359.80,197.80 Q380.10,202.30 401.40,194.70 Q380.10,201.60 359.80,197.80 Z" fill="#222" stroke="#222" stroke-width="0.25"/>
<ellipse cx="412.10" cy="196.00" rx="2.15" ry="1.45" transform="rotate(-22 412.10 196.00)" fill="#111111"/>
<line x1="414.00" y1="195.80" x2="414.00" y2="180.70" stroke="#111111" stroke-width="0.55" />
<line x1="409.50" y1="194.00" x2="414.70" y2="194.00" stroke="#444" stroke-width="0.55" />
<ellipse cx="419.80" cy="193.30" rx="2.15" ry="1.45" transform="rotate(-22 419.80 193.30)" fill="#111111"/>
<line x1="421.70" y1="193.10" x2="421.70" y2="180.70" stroke="#111111" stroke-width="0.55" />
<ellipse cx="428.10" cy="189.30" rx="2.15" ry="1.45" transform="rotate(-22 428.10 189.30)" fill="#111111"/>
<line x1="430.00" y1="189.10" x2="430.00" y2="180.70" stroke="#111111" stroke-width="0.55" />
<ellipse cx="435.80" cy="193.30" rx="2.15" ry="1.45" transform="rotate(-22 435.80 193.30)" fill="#111111"/>
<line x1="437.70" y1="193.10" x2="437.70" y2="180.70" stroke="#111111" stroke-width="0.55" />
<ellipse cx="444.00" cy="196.00" rx="2.15" ry="1.45" transform="rotate(-22 444.00 196.00)" fill="#111111"/>
<line x1="445.90" y1="195.80" x2="445.90" y2="180.70" stroke="#111111" stroke-width="0.55" />
<line x1="441.40" y1="194.00" x2="446.60" y2="194.00" stroke="#444" stroke-width="0.55" />
<ellipse cx="451.80" cy="193.30" rx="2.15" ry="1.45" transform="rotate(-22 451.80 193.30)" fill="#111111"/>
<line x1="453.70" y1="193.10" x2="453.70" y2="180.70" stroke="#111111" stroke-width="0.55" />
<rect x="413.70" y="180.40" width="40.30" height="1.4" fill="#111111"/>
<rect x="413.70" y="182.35" width="40.30" height="1.4" fill="#111111"/>
<ellipse cx="459.10" cy="196.00" rx="2.15" ry="1.45" transform="rotate(-22 459.10 196.00)" fill="#111111"/>
<line x1="461.00" y1="195.80" x2="461.00" y2="180.70" stroke="#111111" stroke-width="0.55" />
<line x1="456.50" y1="194.00" x2="461.70" y2="194.00" stroke="#444" stroke-width="0.55" />
<ellipse cx="467.00" cy="193.30" rx="2.15" ry="1.45" transform="rotate(-22 467.00 193.30)" fill="#111111"/>
<line x1="468.90" y1="193.10" x2="468.90" y2="180.70" stroke="#111111" stroke-width="0.55" />
<ellipse cx="475.10" cy="189.30" rx="2.15" ry="1.45" transform="rotate(-22 475.10 189.30)" fill="#111111"/>
<line x1="477.00" y1="189.10" x2="477.00" y2="180.70" stroke="#111111" stroke-width="0.55" />
<ellipse cx="483.10" cy="193.30" rx="2.15" ry="1.45" transform="rotate(-22 483.10 193.30)" fill="#111111"/>
<line x1="485.00" y1="193.10" x2="485.00" y2="180.70" stroke="#111111" stroke-width="0.55" />
<ellipse cx="491.10" cy="196.00" rx="2.15" ry="1.45" transform="rotate(-22 491.10 196.00)" fill="#111111"/>
<line x1="493.00" y1="195.80" x2="493.00" y2="180.70" stroke="#111111" stroke-width="0.55" />
<line x1="488.50" y1="194.00" x2="493.70" y2="194.00" stroke="#444" stroke-width="0.55" />
<ellipse cx="499.50" cy="193.30" rx="2.15" ry="1.45" transform="rotate(-22 499.50 193.30)" fill="#111111"/>
<line x1="501.40" y1="193.10" x2="501.40" y2="180.70" stroke="#111111" stroke-width="0.55" />
<rect x="460.70" y="180.40" width="41.00" height="1.4" fill="#111111"/>
<rect x="460.70" y="182.35" width="41.00" height="1.4" fill="#111111"/>
<path d="M458.60,199.20 Q479.30,203.70 501.00,196.10 Q479.30,203.00 458.60,199.20 Z" fill="#222" stroke="#222" stroke-width="0.25"/>
<path d="M411.5,199 Q431,207.5 452,196.5" fill="none" stroke="#f08a3c" stroke-width="0.9"/>
<path d="M411.5,199 Q431,200 452,196.5" fill="none" stroke="#f5c4a0" stroke-width="0.5"/>
<circle cx="420.5" cy="203.5" r="0.9" fill="none" stroke="#f06a4a" stroke-width="0.6"/>
<circle cx="432.5" cy="203.5" r="0.9" fill="none" stroke="#f06a4a" stroke-width="0.6"/>
<circle cx="445" cy="203.5" r="0.9" fill="none" stroke="#f06a4a" stroke-width="0.6"/>
<circle cx="412" cy="199.5" r="0.9" fill="none" stroke="#f06a4a" stroke-width="0.6"/>
<circle cx="451.5" cy="196.5" r="0.9" fill="none" stroke="#f06a4a" stroke-width="0.6"/>
<ellipse cx="313.20" cy="209.50" rx="2.15" ry="1.45" transform="rotate(-22 313.20 209.50)" fill="#111111"/>
<line x1="311.40" y1="209.80" x2="311.40" y2="217.50" stroke="#111111" stroke-width="0.6" />
<ellipse cx="360.40" cy="209.50" rx="2.15" ry="1.45" transform="rotate(-22 360.40 209.50)" fill="#111111"/>
<line x1="358.60" y1="209.80" x2="358.60" y2="217.50" stroke="#111111" stroke-width="0.6" />
<ellipse cx="412.50" cy="209.50" rx="2.15" ry="1.45" transform="rotate(-22 412.50 209.50)" fill="#111111"/>
<line x1="410.70" y1="209.80" x2="410.70" y2="217.50" stroke="#111111" stroke-width="0.6" />
<ellipse cx="459.70" cy="209.50" rx="2.15" ry="1.45" transform="rotate(-22 459.70 209.50)" fill="#111111"/>
<line x1="457.90" y1="209.80" x2="457.90" y2="217.50" stroke="#111111" stroke-width="0.6" />
<circle cx="344.80" cy="210.40" r="0.9" fill="#111111"/>
<path d="M344.30,210.80 Q345.80,211.40 346.70,209.90 L345.20,214.80" fill="none" stroke="#111111" stroke-width="0.75"/>
<circle cx="392.60" cy="210.40" r="0.9" fill="#111111"/>
<path d="M392.10,210.80 Q393.60,211.40 394.50,209.90 L393.00,214.80" fill="none" stroke="#111111" stroke-width="0.75"/>
<circle cx="444.30" cy="210.40" r="0.9" fill="#111111"/>
<path d="M443.80,210.80 Q445.30,211.40 446.20,209.90 L444.70,214.80" fill="none" stroke="#111111" stroke-width="0.75"/>
<circle cx="491.80" cy="210.40" r="0.9" fill="#111111"/>
<path d="M491.30,210.80 Q492.80,211.40 493.70,209.90 L492.20,214.80" fill="none" stroke="#111111" stroke-width="0.75"/>
<line x1="209.60" y1="267.40" x2="505.50" y2="267.40" stroke="#6a6a6a" stroke-width="0.6" />
<line x1="209.60" y1="270.10" x2="505.50" y2="270.10" stroke="#6a6a6a" stroke-width="0.6" />
<line x1="209.60" y1="272.80" x2="505.50" y2="272.80" stroke="#6a6a6a" stroke-width="0.6" />
<line x1="209.60" y1="275.50" x2="505.50" y2="275.50" stroke="#6a6a6a" stroke-width="0.6" />
<line x1="209.60" y1="278.20" x2="505.50" y2="278.20" stroke="#6a6a6a" stroke-width="0.6" />
<line x1="209.60" y1="309.00" x2="505.50" y2="309.00" stroke="#6a6a6a" stroke-width="0.6" />
<line x1="209.60" y1="311.70" x2="505.50" y2="311.70" stroke="#6a6a6a" stroke-width="0.6" />
<line x1="209.60" y1="314.40" x2="505.50" y2="314.40" stroke="#6a6a6a" stroke-width="0.6" />
<line x1="209.60" y1="317.10" x2="505.50" y2="317.10" stroke="#6a6a6a" stroke-width="0.6" />
<line x1="209.60" y1="319.80" x2="505.50" y2="319.80" stroke="#6a6a6a" stroke-width="0.6" />
<line x1="209.60" y1="335.00" x2="505.50" y2="335.00" stroke="#6a6a6a" stroke-width="0.6" />
<line x1="209.60" y1="337.70" x2="505.50" y2="337.70" stroke="#6a6a6a" stroke-width="0.6" />
<line x1="209.60" y1="340.40" x2="505.50" y2="340.40" stroke="#6a6a6a" stroke-width="0.6" />
<line x1="209.60" y1="343.10" x2="505.50" y2="343.10" stroke="#6a6a6a" stroke-width="0.6" />
<line x1="209.60" y1="345.80" x2="505.50" y2="345.80" stroke="#6a6a6a" stroke-width="0.6" />
<line x1="209.60" y1="267.40" x2="209.60" y2="331.00" stroke="#5a8fd0" stroke-width="0.8" />
<path d="M208.30,309.00 C204.80,314.00 207.80,317.00 205.00,323.00 C207.80,329.00 204.80,332.00 208.30,337.00 C206.30,332.00 208.90,329.00 205.90,323.00 C208.90,317.00 206.30,314.00 208.30,309.00 Z" fill="#111111" stroke="#111111" stroke-width="0.3"/>
<text x="211.00" y="263.30" font-family='"Liberation Serif",serif' font-size="5" fill="#333" textLength="3.50" lengthAdjust="spacingAndGlyphs" font-style="italic">7</text>
<path d="M215.33,275.91 C215.12,275.68 214.11,275.04 214.09,274.54 C214.07,274.03 214.67,272.98 215.19,272.88 C215.72,272.79 216.82,273.41 217.26,273.99 C217.69,274.56 218.04,275.61 217.81,276.33 C217.58,277.04 216.66,277.98 215.88,278.25 C215.10,278.53 213.86,278.44 213.13,277.98 C212.39,277.52 211.57,276.46 211.48,275.50 C211.38,274.54 211.93,273.16 212.58,272.20 C213.22,271.23 214.60,270.54 215.33,269.72 C216.07,268.89 216.75,268.04 216.98,267.24 C217.21,266.43 216.89,265.45 216.71,264.90 C216.52,264.35 216.20,263.86 215.88,263.93 C215.56,264.00 215.03,264.62 214.78,265.31 C214.53,266.00 214.23,266.00 214.37,268.06 C214.50,270.13 215.31,275.59 215.61,277.70 C215.90,279.81 216.18,280.00 216.16,280.73 C216.13,281.47 215.84,281.90 215.47,282.11 C215.10,282.32 214.21,281.99 213.95,281.97 " fill="none" stroke="#111111" stroke-width="0.95"/>
<circle cx="214.09" cy="281.42" r="1.51" fill="#111111"/>
<path d="M221.70,268.60 L221.70,274.10 Q224.30,272.60 223.90,271.40 Q223.30,270.50 221.70,271.90" fill="none" stroke="#111111" stroke-width="0.55"/>
<path d="M215.33,317.51 C215.12,317.28 214.11,316.64 214.09,316.14 C214.07,315.63 214.67,314.58 215.19,314.48 C215.72,314.39 216.82,315.01 217.26,315.59 C217.69,316.16 218.04,317.21 217.81,317.93 C217.58,318.64 216.66,319.58 215.88,319.85 C215.10,320.13 213.86,320.04 213.13,319.58 C212.39,319.12 211.57,318.06 211.48,317.10 C211.38,316.14 211.93,314.76 212.58,313.80 C213.22,312.83 214.60,312.14 215.33,311.32 C216.07,310.49 216.75,309.64 216.98,308.84 C217.21,308.03 216.89,307.05 216.71,306.50 C216.52,305.95 216.20,305.46 215.88,305.53 C215.56,305.60 215.03,306.22 214.78,306.91 C214.53,307.60 214.23,307.60 214.37,309.66 C214.50,311.73 215.31,317.19 215.61,319.30 C215.90,321.41 216.18,321.60 216.16,322.33 C216.13,323.07 215.84,323.50 215.47,323.71 C215.10,323.92 214.21,323.59 213.95,323.57 " fill="none" stroke="#111111" stroke-width="0.95"/>
<circle cx="214.09" cy="323.02" r="1.51" fill="#111111"/>
<path d="M221.70,310.20 L221.70,315.70 Q224.30,314.20 223.90,313.00 Q223.30,312.10 221.70,313.50" fill="none" stroke="#111111" stroke-width="0.55"/>
<line x1="317.30" y1="267.40" x2="317.30" y2="278.20" stroke="#222" stroke-width="0.6" />
<line x1="317.30" y1="309.00" x2="317.30" y2="331.00" stroke="#222" stroke-width="0.6" />
<line x1="411.50" y1="267.40" x2="411.50" y2="278.20" stroke="#222" stroke-width="0.6" />
<line x1="411.50" y1="309.00" x2="411.50" y2="331.00" stroke="#222" stroke-width="0.6" />
<ellipse cx="231.50" cy="270.10" rx="2.15" ry="1.45" transform="rotate(-22 231.50 270.10)" fill="#111111"/>
<line x1="229.70" y1="270.40" x2="229.70" y2="279.10" stroke="#111111" stroke-width="0.6" />
<ellipse cx="261.00" cy="269.40" rx="2.15" ry="1.45" transform="rotate(-22 261.00 269.40)" fill="#111111"/>
<line x1="259.20" y1="269.70" x2="259.20" y2="278.40" stroke="#111111" stroke-width="0.6" />
<path d="M259.20,278.40 q0.5,-2.4 2.3,-3.6 q0.8,-1.2 0.2,-3" fill="none" stroke="#111111" stroke-width="0.8"/>
<ellipse cx="275.20" cy="275.60" rx="2.15" ry="1.45" transform="rotate(-22 275.20 275.60)" fill="#111111"/>
<line x1="277.10" y1="275.30" x2="277.10" y2="266.60" stroke="#111111" stroke-width="0.6" />
<ellipse cx="304.40" cy="269.40" rx="2.15" ry="1.45" transform="rotate(-22 304.40 269.40)" fill="#111111"/>
<line x1="302.60" y1="269.70" x2="302.60" y2="278.40" stroke="#111111" stroke-width="0.6" />
<path d="M302.60,278.40 q0.5,-2.4 2.3,-3.6 q0.8,-1.2 0.2,-3" fill="none" stroke="#111111" stroke-width="0.8"/>
<ellipse cx="323.30" cy="274.20" rx="2.15" ry="1.45" transform="rotate(-22 323.30 274.20)" fill="#111111"/>
<line x1="325.20" y1="273.90" x2="325.20" y2="266.20" stroke="#111111" stroke-width="0.6" />
<circle cx="352.30" cy="271.20" r="0.9" fill="#111111"/>
<path d="M351.80,271.60 Q353.30,272.20 354.20,270.70 L352.70,275.60" fill="none" stroke="#111111" stroke-width="0.75"/>
<ellipse cx="367.40" cy="274.20" rx="2.15" ry="1.45" transform="rotate(-22 367.40 274.20)" fill="#111111"/>
<line x1="369.30" y1="273.90" x2="369.30" y2="265.20" stroke="#111111" stroke-width="0.6" />
<path d="M369.30,265.20 q0.5,2.4 2.3,3.6 q0.8,1.2 0.2,3" fill="none" stroke="#111111" stroke-width="0.8"/>
<ellipse cx="383.80" cy="274.20" rx="2.15" ry="1.45" transform="rotate(-22 383.80 274.20)" fill="#111111"/>
<line x1="385.70" y1="273.90" x2="385.70" y2="265.20" stroke="#111111" stroke-width="0.6" />
<path d="M385.70,265.20 q0.5,2.4 2.3,3.6 q0.8,1.2 0.2,3" fill="none" stroke="#111111" stroke-width="0.8"/>
<ellipse cx="399.30" cy="274.20" rx="2.15" ry="1.45" transform="rotate(-22 399.30 274.20)" fill="#111111"/>
<line x1="401.20" y1="273.90" x2="401.20" y2="265.20" stroke="#111111" stroke-width="0.6" />
<path d="M401.20,265.20 q0.5,2.4 2.3,3.6 q0.8,1.2 0.2,3" fill="none" stroke="#111111" stroke-width="0.8"/>
<ellipse cx="418.20" cy="269.60" rx="2.15" ry="1.45" transform="rotate(-22 418.20 269.60)" fill="#111111"/>
<line x1="416.40" y1="269.90" x2="416.40" y2="278.60" stroke="#111111" stroke-width="0.6" />
<ellipse cx="447.20" cy="269.60" rx="2.15" ry="1.45" transform="rotate(-22 447.20 269.60)" fill="#111111"/>
<line x1="445.40" y1="269.90" x2="445.40" y2="278.60" stroke="#111111" stroke-width="0.6" />
<path d="M445.40,278.60 q0.5,-2.4 2.3,-3.6 q0.8,-1.2 0.2,-3" fill="none" stroke="#111111" stroke-width="0.8"/>
<ellipse cx="462.00" cy="268.40" rx="2.15" ry="1.45" transform="rotate(-22 462.00 268.40)" fill="#111111"/>
<line x1="460.20" y1="268.70" x2="460.20" y2="277.40" stroke="#111111" stroke-width="0.6" />
<ellipse cx="492.80" cy="268.40" rx="2.15" ry="1.45" transform="rotate(-22 492.80 268.40)" fill="#111111"/>
<line x1="491.00" y1="268.70" x2="491.00" y2="277.40" stroke="#111111" stroke-width="0.6" />
<path d="M491.00,277.40 q0.5,-2.4 2.3,-3.6 q0.8,-1.2 0.2,-3" fill="none" stroke="#111111" stroke-width="0.8"/>
<text x="228.00" y="288.20" font-family='"Liberation Serif",serif' font-size="6.6" fill="#222" textLength="7.40" lengthAdjust="spacingAndGlyphs">He</text>
<text x="244.00" y="288.20" font-family='"Liberation Serif",serif' font-size="6.6" fill="#222" textLength="2.00" lengthAdjust="spacingAndGlyphs">-</text>
<text x="254.60" y="288.20" font-family='"Liberation Serif",serif' font-size="6.6" fill="#222" textLength="12.40" lengthAdjust="spacingAndGlyphs">cken</text>
<text x="270.70" y="288.20" font-family='"Liberation Serif",serif' font-size="6.6" fill="#222" textLength="9.30" lengthAdjust="spacingAndGlyphs">sah</text>
<text x="298.60" y="288.20" font-family='"Liberation Serif",serif' font-size="6.6" fill="#222" textLength="11.30" lengthAdjust="spacingAndGlyphs">ichs</text>
<text x="314.80" y="288.20" font-family='"Liberation Serif",serif' font-size="6.6" fill="#222" textLength="17.40" lengthAdjust="spacingAndGlyphs">blühn,</text>
<text x="362.60" y="288.20" font-family='"Liberation Serif",serif' font-size="6.6" fill="#222" textLength="8.60" lengthAdjust="spacingAndGlyphs">tag</text>
<text x="375.00" y="288.20" font-family='"Liberation Serif",serif' font-size="6.6" fill="#222" textLength="2.00" lengthAdjust="spacingAndGlyphs">-</text>
<text x="378.70" y="288.20" font-family='"Liberation Serif",serif' font-size="6.6" fill="#222" textLength="9.30" lengthAdjust="spacingAndGlyphs">täg</text>
<text x="392.50" y="288.20" font-family='"Liberation Serif",serif' font-size="6.6" fill="#222" textLength="2.00" lengthAdjust="spacingAndGlyphs">-</text>
<text x="396.00" y="288.20" font-family='"Liberation Serif",serif' font-size="6.6" fill="#222" textLength="7.50" lengthAdjust="spacingAndGlyphs">lich</text>
<text x="412.70" y="288.20" font-family='"Liberation Serif",serif' font-size="6.6" fill="#222" textLength="9.60" lengthAdjust="spacingAndGlyphs">sah</text>
<text x="443.10" y="288.20" font-family='"Liberation Serif",serif' font-size="6.6" fill="#222" textLength="7.80" lengthAdjust="spacingAndGlyphs">ich</text>
<text x="456.60" y="288.20" font-family='"Liberation Serif",serif' font-size="6.6" fill="#222" textLength="9.90" lengthAdjust="spacingAndGlyphs">neu</text>
<text x="477.50" y="288.20" font-family='"Liberation Serif",serif' font-size="6.6" fill="#222" textLength="2.00" lengthAdjust="spacingAndGlyphs">-</text>
<text x="490.60" y="288.20" font-family='"Liberation Serif",serif' font-size="6.6" fill="#222" textLength="3.40" lengthAdjust="spacingAndGlyphs">e</text>
<text x="226.00" y="296.80" font-family='"Liberation Serif",serif' font-size="6.6" fill="#222" textLength="11.20" lengthAdjust="spacingAndGlyphs">Sän</text>
<text x="245.50" y="296.80" font-family='"Liberation Serif",serif' font-size="6.6" fill="#222" textLength="2.00" lengthAdjust="spacingAndGlyphs">-</text>
<text x="255.80" y="296.80" font-family='"Liberation Serif",serif' font-size="6.6" fill="#222" textLength="8.70" lengthAdjust="spacingAndGlyphs">ger</text>
<text x="270.00" y="296.80" font-family='"Liberation Serif",serif' font-size="6.6" fill="#222" textLength="9.40" lengthAdjust="spacingAndGlyphs">Auf</text>
<text x="289.00" y="296.80" font-family='"Liberation Serif",serif' font-size="6.6" fill="#222" textLength="2.00" lengthAdjust="spacingAndGlyphs">-</text>
<text x="298.60" y="296.80" font-family='"Liberation Serif",serif' font-size="6.6" fill="#222" textLength="11.30" lengthAdjust="spacingAndGlyphs">fent</text>
<text x="312.50" y="296.80" font-family='"Liberation Serif",serif' font-size="6.6" fill="#222" textLength="2.00" lengthAdjust="spacingAndGlyphs">-</text>
<text x="317.30" y="296.80" font-family='"Liberation Serif",serif' font-size="6.6" fill="#222" textLength="12.40" lengthAdjust="spacingAndGlyphs">halt,</text>
<text x="363.80" y="296.80" font-family='"Liberation Serif",serif' font-size="6.6" fill="#222" textLength="6.20" lengthAdjust="spacingAndGlyphs">es</text>
<text x="375.60" y="296.80" font-family='"Liberation Serif",serif' font-size="6.6" fill="#222" textLength="15.40" lengthAdjust="spacingAndGlyphs">drang</text>
<text x="393.50" y="296.80" font-family='"Liberation Serif",serif' font-size="6.6" fill="#222" textLength="10.00" lengthAdjust="spacingAndGlyphs">mir</text>
<text x="412.00" y="296.80" font-family='"Liberation Serif",serif' font-size="6.6" fill="#222" textLength="11.30" lengthAdjust="spacingAndGlyphs">bald</text>
<text x="442.40" y="296.80" font-family='"Liberation Serif",serif' font-size="6.6" fill="#222" textLength="8.80" lengthAdjust="spacingAndGlyphs">auf</text>
<text x="458.70" y="296.80" font-family='"Liberation Serif",serif' font-size="6.6" fill="#222" textLength="5.70" lengthAdjust="spacingAndGlyphs">al</text>
<text x="474.70" y="296.80" font-family='"Liberation Serif",serif' font-size="6.6" fill="#222" textLength="2.00" lengthAdjust="spacingAndGlyphs">-</text>
<text x="487.70" y="296.80" font-family='"Liberation Serif",serif' font-size="6.6" fill="#222" textLength="8.50" lengthAdjust="spacingAndGlyphs">len</text>
<ellipse cx="231.10" cy="324.60" rx="2.15" ry="1.45" transform="rotate(-22 231.10 324.60)" fill="#111111"/>
<line x1="233.00" y1="324.40" x2="233.00" y2="309.30" stroke="#111111" stroke-width="0.55" />
<line x1="228.50" y1="322.50" x2="233.70" y2="322.50" stroke="#444" stroke-width="0.55" />
<ellipse cx="238.60" cy="321.80" rx="2.15" ry="1.45" transform="rotate(-22 238.60 321.80)" fill="#111111"/>
<line x1="240.50" y1="321.60" x2="240.50" y2="309.30" stroke="#111111" stroke-width="0.55" />
<ellipse cx="246.00" cy="318.10" rx="2.15" ry="1.45" transform="rotate(-22 246.00 318.10)" fill="#111111"/>
<line x1="247.90" y1="317.90" x2="247.90" y2="309.30" stroke="#111111" stroke-width="0.55" />
<ellipse cx="253.10" cy="321.80" rx="2.15" ry="1.45" transform="rotate(-22 253.10 321.80)" fill="#111111"/>
<line x1="255.00" y1="321.60" x2="255.00" y2="309.30" stroke="#111111" stroke-width="0.55" />
<ellipse cx="260.70" cy="324.60" rx="2.15" ry="1.45" transform="rotate(-22 260.70 324.60)" fill="#111111"/>
<line x1="262.60" y1="324.40" x2="262.60" y2="309.30" stroke="#111111" stroke-width="0.55" />
<line x1="258.10" y1="322.50" x2="263.30" y2="322.50" stroke="#444" stroke-width="0.55" />
<ellipse cx="268.10" cy="321.80" rx="2.15" ry="1.45" transform="rotate(-22 268.10 321.80)" fill="#111111"/>
<line x1="270.00" y1="321.60" x2="270.00" y2="309.30" stroke="#111111" stroke-width="0.55" />
<rect x="232.70" y="309.00" width="37.60" height="1.4" fill="#111111"/>
<rect x="232.70" y="310.95" width="37.60" height="1.4" fill="#111111"/>
<path d="M230.60,327.80 Q249.60,332.30 269.60,324.60 Q249.60,331.60 230.60,327.80 Z" fill="#222" stroke="#222" stroke-width="0.25"/>
<ellipse cx="275.10" cy="324.60" rx="2.15" ry="1.45" transform="rotate(-22 275.10 324.60)" fill="#111111"/>
<line x1="277.00" y1="324.40" x2="277.00" y2="311.10" stroke="#111111" stroke-width="0.55" />
<line x1="272.50" y1="322.50" x2="277.70" y2="322.50" stroke="#444" stroke-width="0.55" />
<ellipse cx="282.40" cy="321.80" rx="2.15" ry="1.45" transform="rotate(-22 282.40 321.80)" fill="#111111"/>
<line x1="284.30" y1="321.60" x2="284.30" y2="311.10" stroke="#111111" stroke-width="0.55" />
<ellipse cx="289.80" cy="319.40" rx="2.15" ry="1.45" transform="rotate(-22 289.80 319.40)" fill="#111111"/>
<line x1="291.70" y1="319.20" x2="291.70" y2="311.10" stroke="#111111" stroke-width="0.55" />
<ellipse cx="297.30" cy="321.80" rx="2.15" ry="1.45" transform="rotate(-22 297.30 321.80)" fill="#111111"/>
<line x1="299.20" y1="321.60" x2="299.20" y2="311.10" stroke="#111111" stroke-width="0.55" />
<ellipse cx="304.50" cy="324.60" rx="2.15" ry="1.45" transform="rotate(-22 304.50 324.60)" fill="#111111"/>
<line x1="306.40" y1="324.40" x2="306.40" y2="311.10" stroke="#111111" stroke-width="0.55" />
<line x1="301.90" y1="322.50" x2="307.10" y2="322.50" stroke="#444" stroke-width="0.55" />
<ellipse cx="311.60" cy="321.80" rx="2.15" ry="1.45" transform="rotate(-22 311.60 321.80)" fill="#111111"/>
<line x1="313.50" y1="321.60" x2="313.50" y2="311.10" stroke="#111111" stroke-width="0.55" />
<rect x="276.70" y="310.80" width="37.10" height="1.4" fill="#111111"/>
<rect x="276.70" y="312.75" width="37.10" height="1.4" fill="#111111"/>
<path d="M274.60,327.80 Q293.35,332.30 313.10,324.60 Q293.35,331.60 274.60,327.80 Z" fill="#222" stroke="#222" stroke-width="0.25"/>
<ellipse cx="323.10" cy="324.60" rx="2.15" ry="1.45" transform="rotate(-22 323.10 324.60)" fill="#111111"/>
<line x1="325.00" y1="324.40" x2="325.00" y2="309.30" stroke="#111111" stroke-width="0.55" />
<line x1="320.50" y1="322.50" x2="325.70" y2="322.50" stroke="#444" stroke-width="0.55" />
<ellipse cx="330.70" cy="321.80" rx="2.15" ry="1.45" transform="rotate(-22 330.70 321.80)" fill="#111111"/>
<line x1="332.60" y1="321.60" x2="332.60" y2="309.30" stroke="#111111" stroke-width="0.55" />
<ellipse cx="338.10" cy="318.10" rx="2.15" ry="1.45" transform="rotate(-22 338.10 318.10)" fill="#111111"/>
<line x1="340.00" y1="317.90" x2="340.00" y2="309.30" stroke="#111111" stroke-width="0.55" />
<ellipse cx="345.10" cy="321.80" rx="2.15" ry="1.45" transform="rotate(-22 345.10 321.80)" fill="#111111"/>
<line x1="347.00" y1="321.60" x2="347.00" y2="309.30" stroke="#111111" stroke-width="0.55" />
<ellipse cx="352.40" cy="324.60" rx="2.15" ry="1.45" transform="rotate(-22 352.40 324.60)" fill="#111111"/>
<line x1="354.30" y1="324.40" x2="354.30" y2="309.30" stroke="#111111" stroke-width="0.55" />
<line x1="349.80" y1="322.50" x2="355.00" y2="322.50" stroke="#444" stroke-width="0.55" />
<ellipse cx="359.60" cy="321.80" rx="2.15" ry="1.45" transform="rotate(-22 359.60 321.80)" fill="#111111"/>
<line x1="361.50" y1="321.60" x2="361.50" y2="309.30" stroke="#111111" stroke-width="0.55" />
<rect x="324.70" y="309.00" width="37.10" height="1.4" fill="#111111"/>
<rect x="324.70" y="310.95" width="37.10" height="1.4" fill="#111111"/>
<path d="M322.60,327.80 Q341.35,332.30 361.10,324.60 Q341.35,331.60 322.60,327.80 Z" fill="#222" stroke="#222" stroke-width="0.25"/>
<ellipse cx="366.60" cy="324.60" rx="2.15" ry="1.45" transform="rotate(-22 366.60 324.60)" fill="#111111"/>
<line x1="368.50" y1="324.40" x2="368.50" y2="308.70" stroke="#111111" stroke-width="0.55" />
<line x1="364.00" y1="322.50" x2="369.20" y2="322.50" stroke="#444" stroke-width="0.55" />
<ellipse cx="375.70" cy="321.80" rx="2.15" ry="1.45" transform="rotate(-22 375.70 321.80)" fill="#111111"/>
<line x1="377.60" y1="321.60" x2="377.60" y2="308.70" stroke="#111111" stroke-width="0.55" />
<ellipse cx="383.50" cy="317.20" rx="2.15" ry="1.45" transform="rotate(-22 383.50 317.20)" fill="#111111"/>
<line x1="385.40" y1="317.00" x2="385.40" y2="308.70" stroke="#111111" stroke-width="0.55" />
<ellipse cx="390.60" cy="321.80" rx="2.15" ry="1.45" transform="rotate(-22 390.60 321.80)" fill="#111111"/>
<line x1="392.50" y1="321.60" x2="392.50" y2="308.70" stroke="#111111" stroke-width="0.55" />
<ellipse cx="399.10" cy="324.60" rx="2.15" ry="1.45" transform="rotate(-22 399.10 324.60)" fill="#111111"/>
<line x1="401.00" y1="324.40" x2="401.00" y2="308.70" stroke="#111111" stroke-width="0.55" />
<line x1="396.50" y1="322.50" x2="401.70" y2="322.50" stroke="#444" stroke-width="0.55" />
<ellipse cx="405.90" cy="321.80" rx="2.15" ry="1.45" transform="rotate(-22 405.90 321.80)" fill="#111111"/>
<line x1="407.80" y1="321.60" x2="407.80" y2="308.70" stroke="#111111" stroke-width="0.55" />
<rect x="368.20" y="308.40" width="39.90" height="1.4" fill="#111111"/>
<rect x="368.20" y="310.35" width="39.90" height="1.4" fill="#111111"/>
<path d="M366.10,327.80 Q386.25,332.30 407.40,324.60 Q386.25,331.60 366.10,327.80 Z" fill="#222" stroke="#222" stroke-width="0.25"/>
<ellipse cx="417.40" cy="324.60" rx="2.15" ry="1.45" transform="rotate(-22 417.40 324.60)" fill="#111111"/>
<line x1="419.30" y1="324.40" x2="419.30" y2="309.30" stroke="#111111" stroke-width="0.55" />
<line x1="414.80" y1="322.50" x2="420.00" y2="322.50" stroke="#444" stroke-width="0.55" />
<ellipse cx="424.80" cy="321.00" rx="2.15" ry="1.45" transform="rotate(-22 424.80 321.00)" fill="#111111"/>
<line x1="426.70" y1="320.80" x2="426.70" y2="309.30" stroke="#111111" stroke-width="0.55" />
<ellipse cx="432.40" cy="318.00" rx="2.15" ry="1.45" transform="rotate(-22 432.40 318.00)" fill="#111111"/>
<line x1="434.30" y1="317.80" x2="434.30" y2="309.30" stroke="#111111" stroke-width="0.55" />
<ellipse cx="439.50" cy="321.00" rx="2.15" ry="1.45" transform="rotate(-22 439.50 321.00)" fill="#111111"/>
<line x1="441.40" y1="320.80" x2="441.40" y2="309.30" stroke="#111111" stroke-width="0.55" />
<ellipse cx="446.90" cy="324.60" rx="2.15" ry="1.45" transform="rotate(-22 446.90 324.60)" fill="#111111"/>
<line x1="448.80" y1="324.40" x2="448.80" y2="309.30" stroke="#111111" stroke-width="0.55" />
<line x1="444.30" y1="322.50" x2="449.50" y2="322.50" stroke="#444" stroke-width="0.55" />
<ellipse cx="454.10" cy="321.80" rx="2.15" ry="1.45" transform="rotate(-22 454.10 321.80)" fill="#111111"/>
<line x1="456.00" y1="321.60" x2="456.00" y2="309.30" stroke="#111111" stroke-width="0.55" />
<rect x="419.00" y="309.00" width="37.30" height="1.4" fill="#111111"/>
<rect x="419.00" y="310.95" width="37.30" height="1.4" fill="#111111"/>
<path d="M416.90,327.80 Q435.75,332.30 455.60,324.60 Q435.75,331.60 416.90,327.80 Z" fill="#222" stroke="#222" stroke-width="0.25"/>
<ellipse cx="460.90" cy="324.60" rx="2.15" ry="1.45" transform="rotate(-22 460.90 324.60)" fill="#111111"/>
<line x1="462.80" y1="324.40" x2="462.80" y2="308.70" stroke="#111111" stroke-width="0.55" />
<line x1="458.30" y1="322.50" x2="463.50" y2="322.50" stroke="#444" stroke-width="0.55" />
<ellipse cx="470.10" cy="321.80" rx="2.15" ry="1.45" transform="rotate(-22 470.10 321.80)" fill="#111111"/>
<line x1="472.00" y1="321.60" x2="472.00" y2="308.70" stroke="#111111" stroke-width="0.55" />
<ellipse cx="477.10" cy="317.20" rx="2.15" ry="1.45" transform="rotate(-22 477.10 317.20)" fill="#111111"/>
<line x1="479.00" y1="317.00" x2="479.00" y2="308.70" stroke="#111111" stroke-width="0.55" />
<ellipse cx="484.60" cy="321.80" rx="2.15" ry="1.45" transform="rotate(-22 484.60 321.80)" fill="#111111"/>
<line x1="486.50" y1="321.60" x2="486.50" y2="308.70" stroke="#111111" stroke-width="0.55" />
<ellipse cx="492.40" cy="324.60" rx="2.15" ry="1.45" transform="rotate(-22 492.40 324.60)" fill="#111111"/>
<line x1="494.30" y1="324.40" x2="494.30" y2="308.70" stroke="#111111" stroke-width="0.55" />
<line x1="489.80" y1="322.50" x2="495.00" y2="322.50" stroke="#444" stroke-width="0.55" />
<ellipse cx="499.60" cy="321.80" rx="2.15" ry="1.45" transform="rotate(-22 499.60 321.80)" fill="#111111"/>
<line x1="501.50" y1="321.60" x2="501.50" y2="308.70" stroke="#111111" stroke-width="0.55" />
<rect x="462.50" y="308.40" width="39.30" height="1.4" fill="#111111"/>
<rect x="462.50" y="310.35" width="39.30" height="1.4" fill="#111111"/>
<path d="M460.40,327.80 Q480.25,332.30 501.10,324.60 Q480.25,331.60 460.40,327.80 Z" fill="#222" stroke="#222" stroke-width="0.25"/>
<line x1="372.30" y1="318.50" x2="372.30" y2="324.50" stroke="#111111" stroke-width="0.4" />
<line x1="373.70" y1="318.20" x2="373.70" y2="324.20" stroke="#111111" stroke-width="0.4" />
<line x1="371.50" y1="320.70" x2="374.50" y2="320.00" stroke="#111111" stroke-width="0.8" />
<line x1="371.50" y1="322.70" x2="374.50" y2="322.00" stroke="#111111" stroke-width="0.8" />
<line x1="467.30" y1="318.50" x2="467.30" y2="324.50" stroke="#111111" stroke-width="0.4" />
<line x1="468.70" y1="318.20" x2="468.70" y2="324.20" stroke="#111111" stroke-width="0.4" />
<line x1="466.50" y1="320.70" x2="469.50" y2="320.00" stroke="#111111" stroke-width="0.8" />
<line x1="466.50" y1="322.70" x2="469.50" y2="322.00" stroke="#111111" stroke-width="0.8" />
<line x1="554.50" y1="138.30" x2="836.00" y2="138.30" stroke="#6a6a6a" stroke-width="0.6" />
<line x1="554.50" y1="141.00" x2="836.00" y2="141.00" stroke="#6a6a6a" stroke-width="0.6" />
<line x1="554.50" y1="143.70" x2="836.00" y2="143.70" stroke="#6a6a6a" stroke-width="0.6" />
<line x1="554.50" y1="146.40" x2="836.00" y2="146.40" stroke="#6a6a6a" stroke-width="0.6" />
<line x1="554.50" y1="149.10" x2="836.00" y2="149.10" stroke="#6a6a6a" stroke-width="0.6" />
<line x1="554.50" y1="179.40" x2="836.00" y2="179.40" stroke="#6a6a6a" stroke-width="0.6" />
<line x1="554.50" y1="182.10" x2="836.00" y2="182.10" stroke="#6a6a6a" stroke-width="0.6" />
<line x1="554.50" y1="184.80" x2="836.00" y2="184.80" stroke="#6a6a6a" stroke-width="0.6" />
<line x1="554.50" y1="187.50" x2="836.00" y2="187.50" stroke="#6a6a6a" stroke-width="0.6" />
<line x1="554.50" y1="190.20" x2="836.00" y2="190.20" stroke="#6a6a6a" stroke-width="0.6" />
<line x1="554.50" y1="208.70" x2="836.00" y2="208.70" stroke="#6a6a6a" stroke-width="0.6" />
<line x1="554.50" y1="211.40" x2="836.00" y2="211.40" stroke="#6a6a6a" stroke-width="0.6" />
<line x1="554.50" y1="214.10" x2="836.00" y2="214.10" stroke="#6a6a6a" stroke-width="0.6" />
<line x1="554.50" y1="216.80" x2="836.00" y2="216.80" stroke="#6a6a6a" stroke-width="0.6" />
<line x1="554.50" y1="219.50" x2="836.00" y2="219.50" stroke="#6a6a6a" stroke-width="0.6" />
<line x1="554.50" y1="138.30" x2="554.50" y2="219.50" stroke="#5a8fd0" stroke-width="0.8" />
<path d="M553.00,179.40 C549.50,184.40 552.50,193.45 549.70,199.45 C552.50,205.45 549.50,214.50 553.00,219.50 C551.00,214.50 553.60,205.45 550.60,199.45 C553.60,193.45 551.00,184.40 553.00,179.40 Z" fill="#111111" stroke="#111111" stroke-width="0.3"/>
<text x="556.20" y="132.80" font-family='"Liberation Serif",serif' font-size="5" fill="#333" textLength="2.80" lengthAdjust="spacingAndGlyphs" font-style="italic">9</text>
<path d="M559.93,146.81 C559.72,146.58 558.71,145.94 558.69,145.44 C558.67,144.93 559.27,143.88 559.79,143.78 C560.32,143.69 561.42,144.31 561.86,144.89 C562.29,145.46 562.64,146.51 562.41,147.23 C562.18,147.94 561.26,148.88 560.48,149.15 C559.70,149.43 558.46,149.34 557.73,148.88 C556.99,148.42 556.17,147.36 556.08,146.40 C555.98,145.44 556.53,144.06 557.18,143.10 C557.82,142.13 559.20,141.44 559.93,140.62 C560.67,139.79 561.35,138.94 561.58,138.14 C561.81,137.33 561.49,136.35 561.31,135.80 C561.12,135.25 560.80,134.76 560.48,134.83 C560.16,134.90 559.63,135.52 559.38,136.21 C559.13,136.90 558.83,136.90 558.97,138.96 C559.10,141.03 559.91,146.49 560.21,148.60 C560.50,150.71 560.78,150.90 560.76,151.63 C560.73,152.37 560.44,152.80 560.07,153.01 C559.70,153.22 558.81,152.89 558.55,152.87 " fill="none" stroke="#111111" stroke-width="0.95"/>
<circle cx="558.69" cy="152.32" r="1.51" fill="#111111"/>
<path d="M566.20,139.50 L566.20,145.00 Q568.80,143.50 568.40,142.30 Q567.80,141.40 566.20,142.80" fill="none" stroke="#111111" stroke-width="0.55"/>
<path d="M559.93,187.91 C559.72,187.68 558.71,187.04 558.69,186.54 C558.67,186.03 559.27,184.98 559.79,184.88 C560.32,184.79 561.42,185.41 561.86,185.99 C562.29,186.56 562.64,187.61 562.41,188.33 C562.18,189.04 561.26,189.98 560.48,190.25 C559.70,190.53 558.46,190.44 557.73,189.98 C556.99,189.52 556.17,188.46 556.08,187.50 C555.98,186.54 556.53,185.16 557.18,184.20 C557.82,183.23 559.20,182.54 559.93,181.72 C560.67,180.89 561.35,180.04 561.58,179.24 C561.81,178.43 561.49,177.45 561.31,176.90 C561.12,176.35 560.80,175.86 560.48,175.93 C560.16,176.00 559.63,176.62 559.38,177.31 C559.13,178.00 558.83,178.00 558.97,180.06 C559.10,182.13 559.91,187.59 560.21,189.70 C560.50,191.81 560.78,192.00 560.76,192.73 C560.73,193.47 560.44,193.90 560.07,194.11 C559.70,194.32 558.81,193.99 558.55,193.97 " fill="none" stroke="#111111" stroke-width="0.95"/>
<circle cx="558.69" cy="193.42" r="1.51" fill="#111111"/>
<path d="M566.20,180.60 L566.20,186.10 Q568.80,184.60 568.40,183.40 Q567.80,182.50 566.20,183.90" fill="none" stroke="#111111" stroke-width="0.55"/>
<path d="M556.20,210.90 C557.10,208.10 561.60,208.30 561.20,211.90 C560.90,215.20 558.10,217.70 555.60,218.90" fill="none" stroke="#111111" stroke-width="1.35"/>
<circle cx="556.90" cy="211.30" r="1.25" fill="#111111"/>
<circle cx="562.80" cy="210.60" r="0.5" fill="#111111"/>
<circle cx="562.80" cy="213.10" r="0.5" fill="#111111"/>
<path d="M566.20,212.60 L566.20,218.10 Q568.80,216.60 568.40,215.40 Q567.80,214.50 566.20,215.90" fill="none" stroke="#111111" stroke-width="0.55"/>
<line x1="664.40" y1="138.30" x2="664.40" y2="149.10" stroke="#222" stroke-width="0.6" />
<line x1="664.40" y1="179.40" x2="664.40" y2="219.50" stroke="#222" stroke-width="0.6" />
<line x1="757.50" y1="138.30" x2="757.50" y2="149.10" stroke="#222" stroke-width="0.6" />
<line x1="757.50" y1="179.40" x2="757.50" y2="219.50" stroke="#222" stroke-width="0.6" />
<path d="M573.40,135.30 L573.40,140.80 Q576.00,139.30 575.60,138.10 Q575.00,137.20 573.40,138.60" fill="none" stroke="#111111" stroke-width="0.55"/>
<ellipse cx="578.60" cy="139.50" rx="2.15" ry="1.45" transform="rotate(-22 578.60 139.50)" fill="#111111"/>
<line x1="576.80" y1="139.80" x2="576.80" y2="148.50" stroke="#111111" stroke-width="0.6" />
<circle cx="581.90" cy="138.60" r="0.45" fill="#111111"/>
<ellipse cx="622.00" cy="140.30" rx="2.15" ry="1.45" transform="rotate(-22 622.00 140.30)" fill="#111111"/>
<line x1="620.20" y1="140.60" x2="620.20" y2="149.30" stroke="#111111" stroke-width="0.6" />
<path d="M620.20,149.30 q0.5,-2.4 2.3,-3.6 q0.8,-1.2 0.2,-3" fill="none" stroke="#111111" stroke-width="0.8"/>
<ellipse cx="637.00" cy="141.20" rx="2.15" ry="1.45" transform="rotate(-22 637.00 141.20)" fill="#111111"/>
<line x1="635.20" y1="141.50" x2="635.20" y2="150.20" stroke="#111111" stroke-width="0.6" />
<path d="M635.20,150.20 q0.5,-2.4 2.3,-3.6 q0.8,-1.2 0.2,-3" fill="none" stroke="#111111" stroke-width="0.8"/>
<ellipse cx="652.00" cy="145.00" rx="2.15" ry="1.45" transform="rotate(-22 652.00 145.00)" fill="#111111"/>
<line x1="653.90" y1="144.70" x2="653.90" y2="136.00" stroke="#111111" stroke-width="0.6" />
<path d="M653.90,136.00 q0.5,2.4 2.3,3.6 q0.8,1.2 0.2,3" fill="none" stroke="#111111" stroke-width="0.8"/>
<ellipse cx="671.50" cy="143.40" rx="2.15" ry="1.45" transform="rotate(-22 671.50 143.40)" fill="#111111"/>
<line x1="673.40" y1="143.10" x2="673.40" y2="135.40" stroke="#111111" stroke-width="0.6" />
<circle cx="700.80" cy="140.90" r="0.9" fill="#111111"/>
<path d="M700.30,141.30 Q701.80,141.90 702.70,140.40 L701.20,145.30" fill="none" stroke="#111111" stroke-width="0.75"/>
<ellipse cx="715.60" cy="146.40" rx="2.15" ry="1.45" transform="rotate(-22 715.60 146.40)" fill="#111111"/>
<line x1="717.50" y1="146.10" x2="717.50" y2="137.40" stroke="#111111" stroke-width="0.6" />
<path d="M717.50,137.40 q0.5,2.4 2.3,3.6 q0.8,1.2 0.2,3" fill="none" stroke="#111111" stroke-width="0.8"/>
<ellipse cx="730.60" cy="140.60" rx="2.15" ry="1.45" transform="rotate(-22 730.60 140.60)" fill="#111111"/>
<line x1="728.80" y1="140.90" x2="728.80" y2="149.60" stroke="#111111" stroke-width="0.6" />
<path d="M728.80,149.60 q0.5,-2.4 2.3,-3.6 q0.8,-1.2 0.2,-3" fill="none" stroke="#111111" stroke-width="0.8"/>
<ellipse cx="745.20" cy="141.90" rx="2.15" ry="1.45" transform="rotate(-22 745.20 141.90)" fill="#111111"/>
<line x1="743.40" y1="142.20" x2="743.40" y2="150.90" stroke="#111111" stroke-width="0.6" />
<path d="M743.40,150.90 q0.5,-2.4 2.3,-3.6 q0.8,-1.2 0.2,-3" fill="none" stroke="#111111" stroke-width="0.8"/>
<ellipse cx="763.80" cy="142.50" rx="2.15" ry="1.45" transform="rotate(-22 763.80 142.50)" fill="#111111"/>
<line x1="762.00" y1="142.80" x2="762.00" y2="151.50" stroke="#111111" stroke-width="0.6" />
<ellipse cx="793.40" cy="147.70" rx="2.15" ry="1.45" transform="rotate(-22 793.40 147.70)" fill="#111111"/>
<line x1="795.30" y1="147.40" x2="795.30" y2="138.70" stroke="#111111" stroke-width="0.6" />
<path d="M795.30,138.70 q0.5,2.4 2.3,3.6 q0.8,1.2 0.2,3" fill="none" stroke="#111111" stroke-width="0.8"/>
<ellipse cx="808.00" cy="145.00" rx="2.15" ry="1.45" transform="rotate(-22 808.00 145.00)" fill="#111111"/>
<line x1="809.90" y1="144.70" x2="809.90" y2="136.00" stroke="#111111" stroke-width="0.6" />
<text x="571.40" y="159.00" font-family='"Liberation Serif",serif' font-size="6.6" fill="#222" textLength="13.40" lengthAdjust="spacingAndGlyphs">nicht</text>
<text x="617.50" y="159.00" font-family='"Liberation Serif",serif' font-size="6.6" fill="#222" textLength="9.40" lengthAdjust="spacingAndGlyphs">wie</text>
<text x="632.50" y="159.00" font-family='"Liberation Serif",serif' font-size="6.6" fill="#222" textLength="9.10" lengthAdjust="spacingAndGlyphs">mir</text>
<text x="649.00" y="159.00" font-family='"Liberation Serif",serif' font-size="6.6" fill="#222" textLength="6.00" lengthAdjust="spacingAndGlyphs">ge</text>
<text x="658.00" y="159.00" font-family='"Liberation Serif",serif' font-size="6.6" fill="#222" textLength="2.00" lengthAdjust="spacingAndGlyphs">-</text>
<text x="663.60" y="159.00" font-family='"Liberation Serif",serif' font-size="6.6" fill="#222" textLength="15.20" lengthAdjust="spacingAndGlyphs">schah</text>
<text x="710.00" y="159.00" font-family='"Liberation Serif",serif' font-size="6.6" fill="#222" textLength="10.10" lengthAdjust="spacingAndGlyphs">und</text>
<text x="725.00" y="159.00" font-family='"Liberation Serif",serif' font-size="6.6" fill="#222" textLength="9.40" lengthAdjust="spacingAndGlyphs">wie</text>
<text x="739.60" y="159.00" font-family='"Liberation Serif",serif' font-size="6.6" fill="#222" textLength="9.80" lengthAdjust="spacingAndGlyphs">das</text>
<text x="758.30" y="159.00" font-family='"Liberation Serif",serif' font-size="6.6" fill="#222" textLength="10.70" lengthAdjust="spacingAndGlyphs">wur</text>
<text x="779.00" y="159.00" font-family='"Liberation Serif",serif' font-size="6.6" fill="#222" textLength="2.00" lengthAdjust="spacingAndGlyphs">-</text>
<text x="789.60" y="159.00" font-family='"Liberation Serif",serif' font-size="6.6" fill="#222" textLength="6.40" lengthAdjust="spacingAndGlyphs">de</text>
<text x="802.00" y="159.00" font-family='"Liberation Serif",serif' font-size="6.6" fill="#222" textLength="10.60" lengthAdjust="spacingAndGlyphs">was</text>
<text x="833.00" y="159.00" font-family='"Liberation Serif",serif' font-size="6.6" fill="#222" textLength="7.00" lengthAdjust="spacingAndGlyphs">la</text>
<text x="571.40" y="167.50" font-family='"Liberation Serif",serif' font-size="6.6" fill="#222" textLength="13.40" lengthAdjust="spacingAndGlyphs">nicht</text>
<text x="617.50" y="167.50" font-family='"Liberation Serif",serif' font-size="6.6" fill="#222" textLength="9.40" lengthAdjust="spacingAndGlyphs">wie</text>
<text x="632.50" y="167.50" font-family='"Liberation Serif",serif' font-size="6.6" fill="#222" textLength="9.10" lengthAdjust="spacingAndGlyphs">mir</text>
<text x="649.00" y="167.50" font-family='"Liberation Serif",serif' font-size="6.6" fill="#222" textLength="6.00" lengthAdjust="spacingAndGlyphs">ge</text>
<text x="658.00" y="167.50" font-family='"Liberation Serif",serif' font-size="6.6" fill="#222" textLength="2.00" lengthAdjust="spacingAndGlyphs">-</text>
<text x="663.60" y="167.50" font-family='"Liberation Serif",serif' font-size="6.6" fill="#222" textLength="15.20" lengthAdjust="spacingAndGlyphs">schah</text>
<text x="710.00" y="167.50" font-family='"Liberation Serif",serif' font-size="6.6" fill="#222" textLength="10.10" lengthAdjust="spacingAndGlyphs">und</text>
<text x="725.00" y="167.50" font-family='"Liberation Serif",serif' font-size="6.6" fill="#222" textLength="9.40" lengthAdjust="spacingAndGlyphs">wie</text>
<text x="739.60" y="167.50" font-family='"Liberation Serif",serif' font-size="6.6" fill="#222" textLength="9.80" lengthAdjust="spacingAndGlyphs">das</text>
<text x="758.30" y="167.50" font-family='"Liberation Serif",serif' font-size="6.6" fill="#222" textLength="10.70" lengthAdjust="spacingAndGlyphs">wur</text>
<text x="779.00" y="167.50" font-family='"Liberation Serif",serif' font-size="6.6" fill="#222" textLength="2.00" lengthAdjust="spacingAndGlyphs">-</text>
<text x="789.60" y="167.50" font-family='"Liberation Serif",serif' font-size="6.6" fill="#222" textLength="6.40" lengthAdjust="spacingAndGlyphs">de</text>
<text x="802.00" y="167.50" font-family='"Liberation Serif",serif' font-size="6.6" fill="#222" textLength="10.60" lengthAdjust="spacingAndGlyphs">was</text>
<text x="833.00" y="167.50" font-family='"Liberation Serif",serif' font-size="6.6" fill="#222" textLength="7.00" lengthAdjust="spacingAndGlyphs">la</text>
<ellipse cx="577.40" cy="193.00" rx="2.15" ry="1.45" transform="rotate(-22 577.40 193.00)" fill="#111111"/>
<line x1="579.30" y1="192.80" x2="579.30" y2="177.50" stroke="#111111" stroke-width="0.55" />
<line x1="574.80" y1="192.90" x2="580.00" y2="192.90" stroke="#444" stroke-width="0.55" />
<ellipse cx="585.10" cy="190.20" rx="2.15" ry="1.45" transform="rotate(-22 585.10 190.20)" fill="#111111"/>
<line x1="587.00" y1="190.00" x2="587.00" y2="177.50" stroke="#111111" stroke-width="0.55" />
<ellipse cx="592.70" cy="186.00" rx="2.15" ry="1.45" transform="rotate(-22 592.70 186.00)" fill="#111111"/>
<line x1="594.60" y1="185.80" x2="594.60" y2="177.50" stroke="#111111" stroke-width="0.55" />
<ellipse cx="600.10" cy="190.20" rx="2.15" ry="1.45" transform="rotate(-22 600.10 190.20)" fill="#111111"/>
<line x1="602.00" y1="190.00" x2="602.00" y2="177.50" stroke="#111111" stroke-width="0.55" />
<ellipse cx="607.10" cy="193.00" rx="2.15" ry="1.45" transform="rotate(-22 607.10 193.00)" fill="#111111"/>
<line x1="609.00" y1="192.80" x2="609.00" y2="177.50" stroke="#111111" stroke-width="0.55" />
<line x1="604.50" y1="192.90" x2="609.70" y2="192.90" stroke="#444" stroke-width="0.55" />
<ellipse cx="615.10" cy="190.20" rx="2.15" ry="1.45" transform="rotate(-22 615.10 190.20)" fill="#111111"/>
<line x1="617.00" y1="190.00" x2="617.00" y2="177.50" stroke="#111111" stroke-width="0.55" />
<rect x="579.00" y="177.20" width="38.30" height="1.4" fill="#111111"/>
<rect x="579.00" y="179.15" width="38.30" height="1.4" fill="#111111"/>
<path d="M576.90,196.20 Q596.25,200.70 616.60,193.00 Q596.25,200.00 576.90,196.20 Z" fill="#222" stroke="#222" stroke-width="0.25"/>
<path d="M582.00,185.80 L582.00,191.30 Q584.60,189.80 584.20,188.60 Q583.60,187.70 582.00,189.10" fill="none" stroke="#111111" stroke-width="0.55"/>
<ellipse cx="622.10" cy="193.00" rx="2.15" ry="1.45" transform="rotate(-22 622.10 193.00)" fill="#111111"/>
<line x1="624.00" y1="192.80" x2="624.00" y2="177.50" stroke="#111111" stroke-width="0.55" />
<line x1="619.50" y1="192.90" x2="624.70" y2="192.90" stroke="#444" stroke-width="0.55" />
<ellipse cx="629.60" cy="190.50" rx="2.15" ry="1.45" transform="rotate(-22 629.60 190.50)" fill="#111111"/>
<line x1="631.50" y1="190.30" x2="631.50" y2="177.50" stroke="#111111" stroke-width="0.55" />
<ellipse cx="636.90" cy="186.00" rx="2.15" ry="1.45" transform="rotate(-22 636.90 186.00)" fill="#111111"/>
<line x1="638.80" y1="185.80" x2="638.80" y2="177.50" stroke="#111111" stroke-width="0.55" />
<ellipse cx="644.30" cy="190.50" rx="2.15" ry="1.45" transform="rotate(-22 644.30 190.50)" fill="#111111"/>
<line x1="646.20" y1="190.30" x2="646.20" y2="177.50" stroke="#111111" stroke-width="0.55" />
<ellipse cx="651.70" cy="193.00" rx="2.15" ry="1.45" transform="rotate(-22 651.70 193.00)" fill="#111111"/>
<line x1="653.60" y1="192.80" x2="653.60" y2="177.50" stroke="#111111" stroke-width="0.55" />
<line x1="649.10" y1="192.90" x2="654.30" y2="192.90" stroke="#444" stroke-width="0.55" />
<ellipse cx="658.90" cy="190.50" rx="2.15" ry="1.45" transform="rotate(-22 658.90 190.50)" fill="#111111"/>
<line x1="660.80" y1="190.30" x2="660.80" y2="177.50" stroke="#111111" stroke-width="0.55" />
<rect x="623.70" y="177.20" width="37.40" height="1.4" fill="#111111"/>
<rect x="623.70" y="179.15" width="37.40" height="1.4" fill="#111111"/>
<path d="M621.60,196.20 Q640.50,200.70 660.40,193.30 Q640.50,200.00 621.60,196.20 Z" fill="#222" stroke="#222" stroke-width="0.25"/>
<ellipse cx="670.10" cy="194.30" rx="2.15" ry="1.45" transform="rotate(-22 670.10 194.30)" fill="#111111"/>
<line x1="672.00" y1="194.10" x2="672.00" y2="179.80" stroke="#111111" stroke-width="0.55" />
<line x1="667.50" y1="192.90" x2="672.70" y2="192.90" stroke="#444" stroke-width="0.55" />
<ellipse cx="678.10" cy="191.50" rx="2.15" ry="1.45" transform="rotate(-22 678.10 191.50)" fill="#111111"/>
<line x1="680.00" y1="191.30" x2="680.00" y2="179.80" stroke="#111111" stroke-width="0.55" />
<ellipse cx="685.40" cy="187.80" rx="2.15" ry="1.45" transform="rotate(-22 685.40 187.80)" fill="#111111"/>
<line x1="687.30" y1="187.60" x2="687.30" y2="179.80" stroke="#111111" stroke-width="0.55" />
<ellipse cx="693.00" cy="191.50" rx="2.15" ry="1.45" transform="rotate(-22 693.00 191.50)" fill="#111111"/>
<line x1="694.90" y1="191.30" x2="694.90" y2="179.80" stroke="#111111" stroke-width="0.55" />
<ellipse cx="700.50" cy="194.30" rx="2.15" ry="1.45" transform="rotate(-22 700.50 194.30)" fill="#111111"/>
<line x1="702.40" y1="194.10" x2="702.40" y2="179.80" stroke="#111111" stroke-width="0.55" />
<line x1="697.90" y1="192.90" x2="703.10" y2="192.90" stroke="#444" stroke-width="0.55" />
<ellipse cx="707.50" cy="191.50" rx="2.15" ry="1.45" transform="rotate(-22 707.50 191.50)" fill="#111111"/>
<line x1="709.40" y1="191.30" x2="709.40" y2="179.80" stroke="#111111" stroke-width="0.55" />
<rect x="671.70" y="179.50" width="38.00" height="1.4" fill="#111111"/>
<rect x="671.70" y="181.45" width="38.00" height="1.4" fill="#111111"/>
<path d="M669.60,197.50 Q688.80,202.00 709.00,194.30 Q688.80,201.30 669.60,197.50 Z" fill="#222" stroke="#222" stroke-width="0.25"/>
<ellipse cx="715.10" cy="194.30" rx="2.15" ry="1.45" transform="rotate(-22 715.10 194.30)" fill="#111111"/>
<line x1="717.00" y1="194.10" x2="717.00" y2="179.80" stroke="#111111" stroke-width="0.55" />
<line x1="712.50" y1="192.90" x2="717.70" y2="192.90" stroke="#444" stroke-width="0.55" />
<ellipse cx="722.60" cy="192.50" rx="2.15" ry="1.45" transform="rotate(-22 722.60 192.50)" fill="#111111"/>
<line x1="724.50" y1="192.30" x2="724.50" y2="179.80" stroke="#111111" stroke-width="0.55" />
<line x1="720.00" y1="192.90" x2="725.20" y2="192.90" stroke="#444" stroke-width="0.55" />
<ellipse cx="730.00" cy="187.80" rx="2.15" ry="1.45" transform="rotate(-22 730.00 187.80)" fill="#111111"/>
<line x1="731.90" y1="187.60" x2="731.90" y2="179.80" stroke="#111111" stroke-width="0.55" />
<ellipse cx="737.10" cy="192.50" rx="2.15" ry="1.45" transform="rotate(-22 737.10 192.50)" fill="#111111"/>
<line x1="739.00" y1="192.30" x2="739.00" y2="179.80" stroke="#111111" stroke-width="0.55" />
<line x1="734.50" y1="192.90" x2="739.70" y2="192.90" stroke="#444" stroke-width="0.55" />
<ellipse cx="744.60" cy="194.30" rx="2.15" ry="1.45" transform="rotate(-22 744.60 194.30)" fill="#111111"/>
<line x1="746.50" y1="194.10" x2="746.50" y2="179.80" stroke="#111111" stroke-width="0.55" />
<line x1="742.00" y1="192.90" x2="747.20" y2="192.90" stroke="#444" stroke-width="0.55" />
<ellipse cx="752.10" cy="192.50" rx="2.15" ry="1.45" transform="rotate(-22 752.10 192.50)" fill="#111111"/>
<line x1="754.00" y1="192.30" x2="754.00" y2="179.80" stroke="#111111" stroke-width="0.55" />
<line x1="749.50" y1="192.90" x2="754.70" y2="192.90" stroke="#444" stroke-width="0.55" />
<rect x="716.70" y="179.50" width="37.60" height="1.4" fill="#111111"/>
<rect x="716.70" y="181.45" width="37.60" height="1.4" fill="#111111"/>
<path d="M714.60,197.50 Q733.60,202.00 753.60,195.30 Q733.60,201.30 714.60,197.50 Z" fill="#222" stroke="#222" stroke-width="0.25"/>
<ellipse cx="763.50" cy="195.60" rx="2.15" ry="1.45" transform="rotate(-22 763.50 195.60)" fill="#111111"/>
<line x1="765.40" y1="195.40" x2="765.40" y2="180.00" stroke="#111111" stroke-width="0.55" />
<line x1="760.90" y1="192.90" x2="766.10" y2="192.90" stroke="#444" stroke-width="0.55" />
<ellipse cx="771.10" cy="193.00" rx="2.15" ry="1.45" transform="rotate(-22 771.10 193.00)" fill="#111111"/>
<line x1="773.00" y1="192.80" x2="773.00" y2="180.00" stroke="#111111" stroke-width="0.55" />
<line x1="768.50" y1="192.90" x2="773.70" y2="192.90" stroke="#444" stroke-width="0.55" />
<ellipse cx="778.50" cy="189.10" rx="2.15" ry="1.45" transform="rotate(-22 778.50 189.10)" fill="#111111"/>
<line x1="780.40" y1="188.90" x2="780.40" y2="180.00" stroke="#111111" stroke-width="0.55" />
<ellipse cx="785.60" cy="193.00" rx="2.15" ry="1.45" transform="rotate(-22 785.60 193.00)" fill="#111111"/>
<line x1="787.50" y1="192.80" x2="787.50" y2="180.00" stroke="#111111" stroke-width="0.55" />
<line x1="783.00" y1="192.90" x2="788.20" y2="192.90" stroke="#444" stroke-width="0.55" />
<ellipse cx="793.20" cy="195.60" rx="2.15" ry="1.45" transform="rotate(-22 793.20 195.60)" fill="#111111"/>
<line x1="795.10" y1="195.40" x2="795.10" y2="180.00" stroke="#111111" stroke-width="0.55" />
<line x1="790.60" y1="192.90" x2="795.80" y2="192.90" stroke="#444" stroke-width="0.55" />
<ellipse cx="800.50" cy="193.00" rx="2.15" ry="1.45" transform="rotate(-22 800.50 193.00)" fill="#111111"/>
<line x1="802.40" y1="192.80" x2="802.40" y2="180.00" stroke="#111111" stroke-width="0.55" />
<line x1="797.90" y1="192.90" x2="803.10" y2="192.90" stroke="#444" stroke-width="0.55" />
<rect x="765.10" y="179.70" width="37.60" height="1.4" fill="#111111"/>
<rect x="765.10" y="181.65" width="37.60" height="1.4" fill="#111111"/>
<path d="M763.00,198.80 Q782.00,203.30 802.00,195.80 Q782.00,202.60 763.00,198.80 Z" fill="#222" stroke="#222" stroke-width="0.25"/>
<ellipse cx="807.40" cy="193.50" rx="2.15" ry="1.45" transform="rotate(-22 807.40 193.50)" fill="#111111"/>
<line x1="809.30" y1="193.30" x2="809.30" y2="182.70" stroke="#111111" stroke-width="0.55" />
<line x1="804.80" y1="192.90" x2="810.00" y2="192.90" stroke="#444" stroke-width="0.55" />
<ellipse cx="815.10" cy="193.00" rx="2.15" ry="1.45" transform="rotate(-22 815.10 193.00)" fill="#111111"/>
<line x1="817.00" y1="192.80" x2="817.00" y2="182.70" stroke="#111111" stroke-width="0.55" />
<line x1="812.50" y1="192.90" x2="817.70" y2="192.90" stroke="#444" stroke-width="0.55" />
<ellipse cx="822.50" cy="190.30" rx="2.15" ry="1.45" transform="rotate(-22 822.50 190.30)" fill="#111111"/>
<line x1="824.40" y1="190.10" x2="824.40" y2="182.70" stroke="#111111" stroke-width="0.55" />
<ellipse cx="829.80" cy="193.00" rx="2.15" ry="1.45" transform="rotate(-22 829.80 193.00)" fill="#111111"/>
<line x1="831.70" y1="192.80" x2="831.70" y2="182.70" stroke="#111111" stroke-width="0.55" />
<line x1="827.20" y1="192.90" x2="832.40" y2="192.90" stroke="#444" stroke-width="0.55" />
<ellipse cx="837.10" cy="195.00" rx="2.15" ry="1.45" transform="rotate(-22 837.10 195.00)" fill="#111111"/>
<line x1="839.00" y1="194.80" x2="839.00" y2="182.70" stroke="#111111" stroke-width="0.55" />
<line x1="834.50" y1="192.90" x2="839.70" y2="192.90" stroke="#444" stroke-width="0.55" />
<rect x="809.00" y="182.40" width="30.30" height="1.4" fill="#111111"/>
<rect x="809.00" y="184.35" width="30.30" height="1.4" fill="#111111"/>
<path d="M806.90,196.70 Q822.25,202.70 838.60,197.80 Q822.25,202.00 806.90,196.70 Z" fill="#222" stroke="#222" stroke-width="0.25"/>
<line x1="571.90" y1="209.30" x2="571.90" y2="214.00" stroke="#111111" stroke-width="0.45" />
<line x1="573.70" y1="211.00" x2="573.70" y2="215.70" stroke="#111111" stroke-width="0.45" />
<line x1="571.90" y1="211.60" x2="573.70" y2="211.00" stroke="#111111" stroke-width="0.8" />
<line x1="571.90" y1="214.00" x2="573.70" y2="213.40" stroke="#111111" stroke-width="0.8" />
<ellipse cx="577.50" cy="212.50" rx="2.15" ry="1.45" transform="rotate(-22 577.50 212.50)" fill="#111111"/>
<line x1="575.70" y1="212.80" x2="575.70" y2="221.50" stroke="#111111" stroke-width="0.6" />
<circle cx="580.80" cy="211.60" r="0.45" fill="#111111"/>
<path d="M574,209.5 Q578,205 582,209" fill="none" stroke="#222" stroke-width="0.6"/>
<ellipse cx="622.20" cy="212.30" rx="2.15" ry="1.45" transform="rotate(-22 622.20 212.30)" fill="#111111"/>
<line x1="620.40" y1="212.60" x2="620.40" y2="221.30" stroke="#111111" stroke-width="0.6" />
<circle cx="625.50" cy="211.40" r="0.45" fill="#111111"/>
<path d="M623,208.5 Q645,199 672,208" fill="none" stroke="#222" stroke-width="0.8"/>
<ellipse cx="671.00" cy="211.00" rx="2.15" ry="1.45" transform="rotate(-22 671.00 211.00)" fill="#111111"/>
<line x1="669.20" y1="211.30" x2="669.20" y2="219.00" stroke="#111111" stroke-width="0.6" />
<circle cx="700.80" cy="211.40" r="0.9" fill="#111111"/>
<path d="M700.30,211.80 Q701.80,212.40 702.70,210.90 L701.20,215.80" fill="none" stroke="#111111" stroke-width="0.75"/>
<line x1="709.60" y1="210.40" x2="709.60" y2="215.10" stroke="#111111" stroke-width="0.45" />
<line x1="711.40" y1="212.10" x2="711.40" y2="216.80" stroke="#111111" stroke-width="0.45" />
<line x1="709.60" y1="212.70" x2="711.40" y2="212.10" stroke="#111111" stroke-width="0.8" />
<line x1="709.60" y1="215.10" x2="711.40" y2="214.50" stroke="#111111" stroke-width="0.8" />
<ellipse cx="715.20" cy="213.60" rx="2.15" ry="1.45" transform="rotate(-22 715.20 213.60)" fill="#111111"/>
<line x1="713.40" y1="213.90" x2="713.40" y2="222.60" stroke="#111111" stroke-width="0.6" />
<circle cx="718.50" cy="212.70" r="0.45" fill="#111111"/>
<path d="M716,209.5 Q740,201 764,208" fill="none" stroke="#222" stroke-width="0.8"/>
<ellipse cx="763.80" cy="212.70" rx="2.15" ry="1.45" transform="rotate(-22 763.80 212.70)" fill="#111111"/>
<line x1="762.00" y1="213.00" x2="762.00" y2="220.70" stroke="#111111" stroke-width="0.6" />
<circle cx="793.30" cy="212.90" r="0.9" fill="#111111"/>
<path d="M792.80,213.30 Q794.30,213.90 795.20,212.40 L793.70,217.30" fill="none" stroke="#111111" stroke-width="0.75"/>
<ellipse cx="807.50" cy="216.30" rx="2.15" ry="1.45" transform="rotate(-22 807.50 216.30)" fill="#111111"/>
<line x1="809.40" y1="216.00" x2="809.40" y2="208.30" stroke="#111111" stroke-width="0.6" />
<line x1="554.50" y1="269.70" x2="671.00" y2="269.70" stroke="#6a6a6a" stroke-width="0.6" />
<line x1="554.50" y1="272.40" x2="671.00" y2="272.40" stroke="#6a6a6a" stroke-width="0.6" />
<line x1="554.50" y1="275.10" x2="671.00" y2="275.10" stroke="#6a6a6a" stroke-width="0.6" />
<line x1="554.50" y1="277.80" x2="671.00" y2="277.80" stroke="#6a6a6a" stroke-width="0.6" />
<line x1="554.50" y1="280.50" x2="671.00" y2="280.50" stroke="#6a6a6a" stroke-width="0.6" />
<line x1="554.50" y1="313.00" x2="671.00" y2="313.00" stroke="#6a6a6a" stroke-width="0.6" />
<line x1="554.50" y1="315.70" x2="671.00" y2="315.70" stroke="#6a6a6a" stroke-width="0.6" />
<line x1="554.50" y1="318.40" x2="671.00" y2="318.40" stroke="#6a6a6a" stroke-width="0.6" />
<line x1="554.50" y1="321.10" x2="671.00" y2="321.10" stroke="#6a6a6a" stroke-width="0.6" />
<line x1="554.50" y1="323.80" x2="671.00" y2="323.80" stroke="#6a6a6a" stroke-width="0.6" />
<line x1="554.50" y1="269.70" x2="554.50" y2="331.00" stroke="#5a8fd0" stroke-width="0.8" />
<path d="M553.00,313.00 C549.50,318.00 552.50,319.00 549.70,325.00 C552.50,331.00 549.50,332.00 553.00,337.00 C551.00,332.00 553.60,331.00 550.60,325.00 C553.60,319.00 551.00,318.00 553.00,313.00 Z" fill="#111111" stroke="#111111" stroke-width="0.3"/>
<text x="555.60" y="264.20" font-family='"Liberation Serif",serif' font-size="5" fill="#333" textLength="6.40" lengthAdjust="spacingAndGlyphs" font-style="italic">12</text>
<path d="M560.43,278.21 C560.22,277.98 559.21,277.34 559.19,276.84 C559.17,276.33 559.77,275.28 560.29,275.18 C560.82,275.09 561.92,275.71 562.36,276.29 C562.79,276.86 563.14,277.91 562.91,278.63 C562.68,279.34 561.76,280.28 560.98,280.55 C560.20,280.83 558.96,280.74 558.23,280.28 C557.49,279.82 556.67,278.76 556.58,277.80 C556.48,276.84 557.03,275.46 557.68,274.50 C558.32,273.53 559.70,272.84 560.43,272.02 C561.17,271.19 561.85,270.34 562.08,269.54 C562.31,268.73 561.99,267.75 561.81,267.20 C561.62,266.65 561.30,266.16 560.98,266.23 C560.66,266.30 560.13,266.92 559.88,267.61 C559.63,268.30 559.33,268.30 559.47,270.36 C559.60,272.43 560.41,277.89 560.71,280.00 C561.00,282.11 561.28,282.30 561.26,283.03 C561.23,283.77 560.94,284.20 560.57,284.41 C560.20,284.62 559.31,284.29 559.05,284.27 " fill="none" stroke="#111111" stroke-width="0.95"/>
<circle cx="559.19" cy="283.72" r="1.51" fill="#111111"/>
<path d="M566.20,270.90 L566.20,276.40 Q568.80,274.90 568.40,273.70 Q567.80,272.80 566.20,274.20" fill="none" stroke="#111111" stroke-width="0.55"/>
<line x1="666.50" y1="269.70" x2="666.50" y2="269.70" stroke="#111111" stroke-width="0" />
<circle cx="666.2" cy="273.75" r="0.5" fill="#111111"/><circle cx="666.2" cy="276.45" r="0.5" fill="#111111"/>
<path d="M560.43,321.51 C560.22,321.28 559.21,320.64 559.19,320.14 C559.17,319.63 559.77,318.58 560.29,318.48 C560.82,318.39 561.92,319.01 562.36,319.59 C562.79,320.16 563.14,321.21 562.91,321.93 C562.68,322.64 561.76,323.58 560.98,323.85 C560.20,324.13 558.96,324.04 558.23,323.58 C557.49,323.12 556.67,322.06 556.58,321.10 C556.48,320.14 557.03,318.76 557.68,317.80 C558.32,316.83 559.70,316.14 560.43,315.32 C561.17,314.49 561.85,313.64 562.08,312.84 C562.31,312.03 561.99,311.05 561.81,310.50 C561.62,309.95 561.30,309.46 560.98,309.53 C560.66,309.60 560.13,310.22 559.88,310.91 C559.63,311.60 559.33,311.60 559.47,313.66 C559.60,315.73 560.41,321.19 560.71,323.30 C561.00,325.41 561.28,325.60 561.26,326.33 C561.23,327.07 560.94,327.50 560.57,327.71 C560.20,327.92 559.31,327.59 559.05,327.57 " fill="none" stroke="#111111" stroke-width="0.95"/>
<circle cx="559.19" cy="327.02" r="1.51" fill="#111111"/>
<path d="M566.20,314.20 L566.20,319.70 Q568.80,318.20 568.40,317.00 Q567.80,316.10 566.20,317.50" fill="none" stroke="#111111" stroke-width="0.55"/>
<line x1="666.50" y1="313.00" x2="666.50" y2="313.00" stroke="#111111" stroke-width="0" />
<circle cx="666.2" cy="317.05" r="0.5" fill="#111111"/><circle cx="666.2" cy="319.75" r="0.5" fill="#111111"/>
<line x1="668.70" y1="269.70" x2="668.70" y2="280.50" stroke="#111111" stroke-width="0.55" />
<line x1="671.00" y1="269.70" x2="671.00" y2="280.50" stroke="#111111" stroke-width="1.5" />
<line x1="668.70" y1="313.00" x2="668.70" y2="331.00" stroke="#111111" stroke-width="0.55" />
<line x1="671.00" y1="313.00" x2="671.00" y2="331.00" stroke="#111111" stroke-width="1.5" />
<ellipse cx="576.50" cy="279.20" rx="2.15" ry="1.45" transform="rotate(-22 576.50 279.20)" fill="#111111"/>
<line x1="578.40" y1="278.90" x2="578.40" y2="270.20" stroke="#111111" stroke-width="0.6" />
<circle cx="606.30" cy="273.40" r="0.9" fill="#111111"/>
<path d="M605.80,273.80 Q607.30,274.40 608.20,272.90 L606.70,277.80" fill="none" stroke="#111111" stroke-width="0.75"/>
<ellipse cx="622.60" cy="279.20" rx="2.15" ry="1.45" transform="rotate(-22 622.60 279.20)" fill="#111111"/>
<line x1="624.50" y1="278.90" x2="624.50" y2="270.20" stroke="#111111" stroke-width="0.6" />
<path d="M624.50,270.20 q0.5,2.4 2.3,3.6 q0.8,1.2 0.2,3" fill="none" stroke="#111111" stroke-width="0.8"/>
<ellipse cx="638.70" cy="276.50" rx="2.15" ry="1.45" transform="rotate(-22 638.70 276.50)" fill="#111111"/>
<line x1="640.60" y1="276.20" x2="640.60" y2="267.50" stroke="#111111" stroke-width="0.6" />
<path d="M640.60,267.50 q0.5,2.4 2.3,3.6 q0.8,1.2 0.2,3" fill="none" stroke="#111111" stroke-width="0.8"/>
<ellipse cx="653.30" cy="275.80" rx="2.15" ry="1.45" transform="rotate(-22 653.30 275.80)" fill="#111111"/>
<line x1="651.50" y1="276.10" x2="651.50" y2="284.80" stroke="#111111" stroke-width="0.6" />
<path d="M651.50,284.80 q0.5,-2.4 2.3,-3.6 q0.8,-1.2 0.2,-3" fill="none" stroke="#111111" stroke-width="0.8"/>
<text x="571.00" y="291.00" font-family='"Liberation Serif",serif' font-size="6.6" fill="#222" textLength="11.10" lengthAdjust="spacingAndGlyphs">sah.</text>
<text x="571.00" y="299.20" font-family='"Liberation Serif",serif' font-size="6.6" fill="#222" textLength="11.10" lengthAdjust="spacingAndGlyphs">sah.</text>
<text x="608.00" y="299.20" font-family='"Liberation Serif",serif' font-size="6.6" fill="#222" textLength="49.60" lengthAdjust="spacingAndGlyphs">2.  Und   im - mer</text>
<text x="608.00" y="307.50" font-family='"Liberation Serif",serif' font-size="6.6" fill="#222" textLength="49.60" lengthAdjust="spacingAndGlyphs">3.  Es   quoll  und</text>
<ellipse cx="576.30" cy="329.20" rx="2.15" ry="1.45" transform="rotate(-22 576.30 329.20)" fill="#111111"/>
<line x1="578.20" y1="329.00" x2="578.20" y2="313.60" stroke="#111111" stroke-width="0.55" />
<line x1="573.70" y1="326.50" x2="578.90" y2="326.50" stroke="#444" stroke-width="0.55" />
<ellipse cx="583.40" cy="326.60" rx="2.15" ry="1.45" transform="rotate(-22 583.40 326.60)" fill="#111111"/>
<line x1="585.30" y1="326.40" x2="585.30" y2="313.60" stroke="#111111" stroke-width="0.55" />
<line x1="580.80" y1="326.50" x2="586.00" y2="326.50" stroke="#444" stroke-width="0.55" />
<ellipse cx="591.70" cy="322.50" rx="2.15" ry="1.45" transform="rotate(-22 591.70 322.50)" fill="#111111"/>
<line x1="593.60" y1="322.30" x2="593.60" y2="313.60" stroke="#111111" stroke-width="0.55" />
<ellipse cx="598.80" cy="326.60" rx="2.15" ry="1.45" transform="rotate(-22 598.80 326.60)" fill="#111111"/>
<line x1="600.70" y1="326.40" x2="600.70" y2="313.60" stroke="#111111" stroke-width="0.55" />
<line x1="596.20" y1="326.50" x2="601.40" y2="326.50" stroke="#444" stroke-width="0.55" />
<ellipse cx="606.40" cy="329.20" rx="2.15" ry="1.45" transform="rotate(-22 606.40 329.20)" fill="#111111"/>
<line x1="608.30" y1="329.00" x2="608.30" y2="313.60" stroke="#111111" stroke-width="0.55" />
<line x1="603.80" y1="326.50" x2="609.00" y2="326.50" stroke="#444" stroke-width="0.55" />
<ellipse cx="613.80" cy="326.60" rx="2.15" ry="1.45" transform="rotate(-22 613.80 326.60)" fill="#111111"/>
<line x1="615.70" y1="326.40" x2="615.70" y2="313.60" stroke="#111111" stroke-width="0.55" />
<line x1="611.20" y1="326.50" x2="616.40" y2="326.50" stroke="#444" stroke-width="0.55" />
<rect x="577.90" y="313.30" width="38.10" height="1.4" fill="#111111"/>
<rect x="577.90" y="315.25" width="38.10" height="1.4" fill="#111111"/>
<ellipse cx="620.90" cy="329.20" rx="2.15" ry="1.45" transform="rotate(-22 620.90 329.20)" fill="#111111"/>
<line x1="622.80" y1="329.00" x2="622.80" y2="313.60" stroke="#111111" stroke-width="0.55" />
<line x1="618.30" y1="326.50" x2="623.50" y2="326.50" stroke="#444" stroke-width="0.55" />
<ellipse cx="628.90" cy="326.60" rx="2.15" ry="1.45" transform="rotate(-22 628.90 326.60)" fill="#111111"/>
<line x1="630.80" y1="326.40" x2="630.80" y2="313.60" stroke="#111111" stroke-width="0.55" />
<line x1="626.30" y1="326.50" x2="631.50" y2="326.50" stroke="#444" stroke-width="0.55" />
<ellipse cx="636.50" cy="322.50" rx="2.15" ry="1.45" transform="rotate(-22 636.50 322.50)" fill="#111111"/>
<line x1="638.40" y1="322.30" x2="638.40" y2="313.60" stroke="#111111" stroke-width="0.55" />
<ellipse cx="644.00" cy="326.60" rx="2.15" ry="1.45" transform="rotate(-22 644.00 326.60)" fill="#111111"/>
<line x1="645.90" y1="326.40" x2="645.90" y2="313.60" stroke="#111111" stroke-width="0.55" />
<line x1="641.40" y1="326.50" x2="646.60" y2="326.50" stroke="#444" stroke-width="0.55" />
<ellipse cx="651.90" cy="329.20" rx="2.15" ry="1.45" transform="rotate(-22 651.90 329.20)" fill="#111111"/>
<line x1="653.80" y1="329.00" x2="653.80" y2="313.60" stroke="#111111" stroke-width="0.55" />
<line x1="649.30" y1="326.50" x2="654.50" y2="326.50" stroke="#444" stroke-width="0.55" />
<ellipse cx="659.90" cy="326.60" rx="2.15" ry="1.45" transform="rotate(-22 659.90 326.60)" fill="#111111"/>
<line x1="661.80" y1="326.40" x2="661.80" y2="313.60" stroke="#111111" stroke-width="0.55" />
<line x1="657.30" y1="326.50" x2="662.50" y2="326.50" stroke="#444" stroke-width="0.55" />
<rect x="622.50" y="313.30" width="39.60" height="1.4" fill="#111111"/>
<rect x="622.50" y="315.25" width="39.60" height="1.4" fill="#111111"/>
<line x1="687.50" y1="269.70" x2="836.00" y2="269.70" stroke="#6a6a6a" stroke-width="0.6" />
<line x1="687.50" y1="272.40" x2="836.00" y2="272.40" stroke="#6a6a6a" stroke-width="0.6" />
<line x1="687.50" y1="275.10" x2="836.00" y2="275.10" stroke="#6a6a6a" stroke-width="0.6" />
<line x1="687.50" y1="277.80" x2="836.00" y2="277.80" stroke="#6a6a6a" stroke-width="0.6" />
<line x1="687.50" y1="280.50" x2="836.00" y2="280.50" stroke="#6a6a6a" stroke-width="0.6" />
<line x1="687.50" y1="313.00" x2="836.00" y2="313.00" stroke="#6a6a6a" stroke-width="0.6" />
<line x1="687.50" y1="315.70" x2="836.00" y2="315.70" stroke="#6a6a6a" stroke-width="0.6" />
<line x1="687.50" y1="318.40" x2="836.00" y2="318.40" stroke="#6a6a6a" stroke-width="0.6" />
<line x1="687.50" y1="321.10" x2="836.00" y2="321.10" stroke="#6a6a6a" stroke-width="0.6" />
<line x1="687.50" y1="323.80" x2="836.00" y2="323.80" stroke="#6a6a6a" stroke-width="0.6" />
<line x1="687.50" y1="269.70" x2="687.50" y2="331.00" stroke="#222" stroke-width="0.7" />
<path d="M686.50,313.00 C683.00,318.00 686.00,319.00 683.20,325.00 C686.00,331.00 683.00,332.00 686.50,337.00 C684.50,332.00 687.10,331.00 684.10,325.00 C687.10,319.00 684.50,318.00 686.50,313.00 Z" fill="#111111" stroke="#111111" stroke-width="0.3"/>
<path d="M693.13,278.21 C692.92,277.98 691.91,277.34 691.89,276.84 C691.87,276.33 692.47,275.28 692.99,275.18 C693.52,275.09 694.62,275.71 695.06,276.29 C695.49,276.86 695.84,277.91 695.61,278.63 C695.38,279.34 694.46,280.28 693.68,280.55 C692.90,280.83 691.66,280.74 690.93,280.28 C690.19,279.82 689.37,278.76 689.28,277.80 C689.18,276.84 689.73,275.46 690.38,274.50 C691.02,273.53 692.40,272.84 693.13,272.02 C693.87,271.19 694.55,270.34 694.78,269.54 C695.01,268.73 694.69,267.75 694.51,267.20 C694.32,266.65 694.00,266.16 693.68,266.23 C693.36,266.30 692.83,266.92 692.58,267.61 C692.33,268.30 692.03,268.30 692.17,270.36 C692.30,272.43 693.11,277.89 693.41,280.00 C693.70,282.11 693.98,282.30 693.96,283.03 C693.93,283.77 693.64,284.20 693.27,284.41 C692.90,284.62 692.01,284.29 691.75,284.27 " fill="none" stroke="#111111" stroke-width="0.95"/>
<circle cx="691.89" cy="283.72" r="1.51" fill="#111111"/>
<path d="M699.60,270.90 L699.60,276.40 Q702.20,274.90 701.80,273.70 Q701.20,272.80 699.60,274.20" fill="none" stroke="#111111" stroke-width="0.55"/>
<path d="M693.13,321.51 C692.92,321.28 691.91,320.64 691.89,320.14 C691.87,319.63 692.47,318.58 692.99,318.48 C693.52,318.39 694.62,319.01 695.06,319.59 C695.49,320.16 695.84,321.21 695.61,321.93 C695.38,322.64 694.46,323.58 693.68,323.85 C692.90,324.13 691.66,324.04 690.93,323.58 C690.19,323.12 689.37,322.06 689.28,321.10 C689.18,320.14 689.73,318.76 690.38,317.80 C691.02,316.83 692.40,316.14 693.13,315.32 C693.87,314.49 694.55,313.64 694.78,312.84 C695.01,312.03 694.69,311.05 694.51,310.50 C694.32,309.95 694.00,309.46 693.68,309.53 C693.36,309.60 692.83,310.22 692.58,310.91 C692.33,311.60 692.03,311.60 692.17,313.66 C692.30,315.73 693.11,321.19 693.41,323.30 C693.70,325.41 693.98,325.60 693.96,326.33 C693.93,327.07 693.64,327.50 693.27,327.71 C692.90,327.92 692.01,327.59 691.75,327.57 " fill="none" stroke="#111111" stroke-width="0.95"/>
<circle cx="691.89" cy="327.02" r="1.51" fill="#111111"/>
<path d="M699.60,314.20 L699.60,319.70 Q702.20,318.20 701.80,317.00 Q701.20,316.10 699.60,317.50" fill="none" stroke="#111111" stroke-width="0.55"/>
<line x1="753.50" y1="269.70" x2="753.50" y2="280.50" stroke="#222" stroke-width="0.6" />
<line x1="753.50" y1="313.00" x2="753.50" y2="331.00" stroke="#222" stroke-width="0.6" />
<circle cx="706.3" cy="263.8" r="2.1" fill="none" stroke="#111" stroke-width="0.7"/><line x1="703.6" y1="263.8" x2="709" y2="263.8" stroke="#111" stroke-width="0.6"/><line x1="706.3" y1="261" x2="706.3" y2="266.6" stroke="#111" stroke-width="0.6"/>
<text x="710.80" y="265.90" font-family='"Liberation Serif",serif' font-size="6.4" fill="#111111" font-weight="bold" textLength="14.70" lengthAdjust="spacingAndGlyphs" >Coda</text>
<ellipse cx="709.30" cy="273.50" rx="2.15" ry="1.45" transform="rotate(-22 709.30 273.50)" fill="#111111"/>
<line x1="707.50" y1="273.80" x2="707.50" y2="282.50" stroke="#111111" stroke-width="0.6" />
<path d="M707.50,282.50 q0.5,-2.4 2.3,-3.6 q0.8,-1.2 0.2,-3" fill="none" stroke="#111111" stroke-width="0.8"/>
<ellipse cx="725.40" cy="276.60" rx="2.15" ry="1.45" transform="rotate(-22 725.40 276.60)" fill="#111111"/>
<line x1="727.30" y1="276.30" x2="727.30" y2="267.60" stroke="#111111" stroke-width="0.6" />
<path d="M727.30,267.60 q0.5,2.4 2.3,3.6 q0.8,1.2 0.2,3" fill="none" stroke="#111111" stroke-width="0.8"/>
<ellipse cx="740.30" cy="279.20" rx="2.15" ry="1.45" transform="rotate(-22 740.30 279.20)" fill="#111111"/>
<line x1="742.20" y1="278.90" x2="742.20" y2="270.20" stroke="#111111" stroke-width="0.6" />
<path d="M742.20,270.20 q0.5,2.4 2.3,3.6 q0.8,1.2 0.2,3" fill="none" stroke="#111111" stroke-width="0.8"/>
<path d="M756.50,266.80 L756.50,272.30 Q759.10,270.80 758.70,269.60 Q758.10,268.70 756.50,270.10" fill="none" stroke="#111111" stroke-width="0.55"/>
<ellipse cx="761.60" cy="271.00" rx="2.15" ry="1.45" transform="rotate(-22 761.60 271.00)" fill="#111111"/>
<line x1="759.80" y1="271.30" x2="759.80" y2="280.00" stroke="#111111" stroke-width="0.6" />
<circle cx="764.90" cy="270.10" r="0.45" fill="#111111"/>
<ellipse cx="807.00" cy="271.00" rx="2.15" ry="1.45" transform="rotate(-22 807.00 271.00)" fill="#111111"/>
<line x1="805.20" y1="271.30" x2="805.20" y2="280.00" stroke="#111111" stroke-width="0.6" />
<path d="M805.20,280.00 q0.5,-2.4 2.3,-3.6 q0.8,-1.2 0.2,-3" fill="none" stroke="#111111" stroke-width="0.8"/>
<ellipse cx="822.30" cy="272.40" rx="2.15" ry="1.45" transform="rotate(-22 822.30 272.40)" fill="#111111"/>
<line x1="820.50" y1="272.70" x2="820.50" y2="281.40" stroke="#111111" stroke-width="0.6" />
<path d="M820.50,281.40 q0.5,-2.4 2.3,-3.6 q0.8,-1.2 0.2,-3" fill="none" stroke="#111111" stroke-width="0.8"/>
<line x1="829.80" y1="270.00" x2="829.80" y2="276.00" stroke="#111111" stroke-width="0.4" />
<line x1="831.20" y1="269.70" x2="831.20" y2="275.70" stroke="#111111" stroke-width="0.4" />
<line x1="829.00" y1="272.20" x2="832.00" y2="271.50" stroke="#111111" stroke-width="0.8" />
<line x1="829.00" y1="274.20" x2="832.00" y2="273.50" stroke="#111111" stroke-width="0.8" />
<text x="703.80" y="290.30" font-family='"Liberation Serif",serif' font-size="6.6" fill="#222" textLength="40.20" lengthAdjust="spacingAndGlyphs">nun  wußt'  ich</text>
<text x="755.00" y="290.30" font-family='"Liberation Serif",serif' font-size="6.6" fill="#222" textLength="12.70" lengthAdjust="spacingAndGlyphs">wohl</text>
<text x="802.00" y="290.30" font-family='"Liberation Serif",serif' font-size="6.6" fill="#222" textLength="9.20" lengthAdjust="spacingAndGlyphs">wie</text>
<text x="816.80" y="290.30" font-family='"Liberation Serif",serif' font-size="6.6" fill="#222" textLength="9.50" lengthAdjust="spacingAndGlyphs">mir</text>
<ellipse cx="708.70" cy="328.90" rx="2.15" ry="1.45" transform="rotate(-22 708.70 328.90)" fill="#111111"/>
<line x1="710.60" y1="328.70" x2="710.60" y2="314.10" stroke="#111111" stroke-width="0.55" />
<line x1="706.10" y1="326.50" x2="711.30" y2="326.50" stroke="#444" stroke-width="0.55" />
<ellipse cx="717.00" cy="326.60" rx="2.15" ry="1.45" transform="rotate(-22 717.00 326.60)" fill="#111111"/>
<line x1="718.90" y1="326.40" x2="718.90" y2="314.10" stroke="#111111" stroke-width="0.55" />
<line x1="714.40" y1="326.50" x2="719.60" y2="326.50" stroke="#444" stroke-width="0.55" />
<ellipse cx="724.60" cy="322.30" rx="2.15" ry="1.45" transform="rotate(-22 724.60 322.30)" fill="#111111"/>
<line x1="726.50" y1="322.10" x2="726.50" y2="314.10" stroke="#111111" stroke-width="0.55" />
<ellipse cx="732.10" cy="326.60" rx="2.15" ry="1.45" transform="rotate(-22 732.10 326.60)" fill="#111111"/>
<line x1="734.00" y1="326.40" x2="734.00" y2="314.10" stroke="#111111" stroke-width="0.55" />
<line x1="729.50" y1="326.50" x2="734.70" y2="326.50" stroke="#444" stroke-width="0.55" />
<ellipse cx="740.10" cy="328.90" rx="2.15" ry="1.45" transform="rotate(-22 740.10 328.90)" fill="#111111"/>
<line x1="742.00" y1="328.70" x2="742.00" y2="314.10" stroke="#111111" stroke-width="0.55" />
<line x1="737.50" y1="326.50" x2="742.70" y2="326.50" stroke="#444" stroke-width="0.55" />
<ellipse cx="747.60" cy="326.60" rx="2.15" ry="1.45" transform="rotate(-22 747.60 326.60)" fill="#111111"/>
<line x1="749.50" y1="326.40" x2="749.50" y2="314.10" stroke="#111111" stroke-width="0.55" />
<line x1="745.00" y1="326.50" x2="750.20" y2="326.50" stroke="#444" stroke-width="0.55" />
<rect x="710.30" y="313.80" width="39.50" height="1.4" fill="#111111"/>
<rect x="710.30" y="315.75" width="39.50" height="1.4" fill="#111111"/>
<ellipse cx="760.90" cy="323.00" rx="2.15" ry="1.45" transform="rotate(-22 760.90 323.00)" fill="#111111"/>
<line x1="762.80" y1="322.80" x2="762.80" y2="309.20" stroke="#111111" stroke-width="0.55" />
<ellipse cx="768.10" cy="322.60" rx="2.15" ry="1.45" transform="rotate(-22 768.10 322.60)" fill="#111111"/>
<line x1="770.00" y1="322.40" x2="770.00" y2="309.20" stroke="#111111" stroke-width="0.55" />
<ellipse cx="776.00" cy="317.20" rx="2.15" ry="1.45" transform="rotate(-22 776.00 317.20)" fill="#111111"/>
<line x1="777.90" y1="317.00" x2="777.90" y2="309.20" stroke="#111111" stroke-width="0.55" />
<ellipse cx="783.60" cy="322.60" rx="2.15" ry="1.45" transform="rotate(-22 783.60 322.60)" fill="#111111"/>
<line x1="785.50" y1="322.40" x2="785.50" y2="309.20" stroke="#111111" stroke-width="0.55" />
<ellipse cx="791.10" cy="323.00" rx="2.15" ry="1.45" transform="rotate(-22 791.10 323.00)" fill="#111111"/>
<line x1="793.00" y1="322.80" x2="793.00" y2="309.20" stroke="#111111" stroke-width="0.55" />
<ellipse cx="798.50" cy="322.60" rx="2.15" ry="1.45" transform="rotate(-22 798.50 322.60)" fill="#111111"/>
<line x1="800.40" y1="322.40" x2="800.40" y2="309.20" stroke="#111111" stroke-width="0.55" />
<rect x="762.50" y="308.90" width="38.20" height="1.4" fill="#111111"/>
<rect x="762.50" y="310.85" width="38.20" height="1.4" fill="#111111"/>
<path d="M760.40,326.20 Q779.70,330.70 800.00,325.40 Q779.70,330.00 760.40,326.20 Z" fill="#222" stroke="#222" stroke-width="0.25"/>
<ellipse cx="806.10" cy="323.00" rx="2.15" ry="1.45" transform="rotate(-22 806.10 323.00)" fill="#111111"/>
<line x1="808.00" y1="322.80" x2="808.00" y2="309.20" stroke="#111111" stroke-width="0.55" />
<ellipse cx="814.10" cy="322.60" rx="2.15" ry="1.45" transform="rotate(-22 814.10 322.60)" fill="#111111"/>
<line x1="816.00" y1="322.40" x2="816.00" y2="309.20" stroke="#111111" stroke-width="0.55" />
<ellipse cx="821.50" cy="317.20" rx="2.15" ry="1.45" transform="rotate(-22 821.50 317.20)" fill="#111111"/>
<line x1="823.40" y1="317.00" x2="823.40" y2="309.20" stroke="#111111" stroke-width="0.55" />
<ellipse cx="829.10" cy="322.60" rx="2.15" ry="1.45" transform="rotate(-22 829.10 322.60)" fill="#111111"/>
<line x1="831.00" y1="322.40" x2="831.00" y2="309.20" stroke="#111111" stroke-width="0.55" />
<rect x="807.70" y="308.90" width="23.60" height="1.4" fill="#111111"/>
<rect x="807.70" y="310.85" width="23.60" height="1.4" fill="#111111"/>
<path d="M805.60,326.20 Q817.60,330.70 830.60,325.40 Q817.60,330.00 805.60,326.20 Z" fill="#222" stroke="#222" stroke-width="0.25"/></g>
<rect x="836" y="28" width="2" height="459" rx="0" fill="#1a1d21" />
<rect x="838" y="28" width="9" height="457" rx="0" fill="#2a2f37" />
<path d="M841,253.5 L843.5,257 L841,260.5" fill="none" stroke="#cfd4d9" stroke-width="1.1" />
<rect x="155" y="331" width="683" height="155" rx="0" fill="#1a1d21" />
<rect x="159.6" y="336.7" width="42" height="15.3" rx="3" fill="#2b3037" />
<rect x="159.6" y="336.7" width="20.1" height="15.3" rx="3" fill="#285b88" />
<circle cx="165.4" cy="341.6" r="0.75" fill="#fff" stroke="none" stroke-width="1" />
<line x1="168" y1="341.6" x2="175.2" y2="341.6" stroke="#fff" stroke-width="1.1" />
<circle cx="165.4" cy="344.55" r="0.75" fill="#fff" stroke="none" stroke-width="1" />
<line x1="168" y1="344.55" x2="175.2" y2="344.55" stroke="#fff" stroke-width="1.1" />
<circle cx="165.4" cy="347.5" r="0.75" fill="#fff" stroke="none" stroke-width="1" />
<line x1="168" y1="347.5" x2="175.2" y2="347.5" stroke="#fff" stroke-width="1.1" />
<line x1="187.1" y1="339" x2="187.1" y2="350" stroke="#dfe3e7" stroke-width="0.9" />
<circle cx="187.1" cy="346.3" r="1.25" fill="#2b3037" stroke="#dfe3e7" stroke-width="0.9" />
<line x1="191.4" y1="339" x2="191.4" y2="350" stroke="#dfe3e7" stroke-width="0.9" />
<circle cx="191.4" cy="341.9" r="1.25" fill="#2b3037" stroke="#dfe3e7" stroke-width="0.9" />
<line x1="195.6" y1="339" x2="195.6" y2="350" stroke="#dfe3e7" stroke-width="0.9" />
<circle cx="195.6" cy="344.4" r="1.25" fill="#2b3037" stroke="#dfe3e7" stroke-width="0.9" />
<rect x="213" y="337.3" width="69" height="14.3" rx="3" fill="#2b3037" />
<text x="215.4" y="347.5" font-family='"Liberation Sans",sans-serif' font-size="8.5" fill="#767d85" textLength="26.60" lengthAdjust="spacingAndGlyphs" >Search...</text>
<text x="301" y="347.5" font-family='"Liberation Sans",sans-serif' font-size="8.5" fill="#b8bec4" textLength="19.00" lengthAdjust="spacingAndGlyphs" >Show:</text>
<rect x="323" y="336" width="42.9" height="16.7" rx="4" fill="#2b3037" />
<text x="327" y="347.5" font-family='"Liberation Sans",sans-serif' font-size="8.5" fill="#e3e7eb" font-weight="bold" textLength="19.50" lengthAdjust="spacingAndGlyphs" >Active</text>
<rect x="350" y="336" width="15.9" height="16.7" rx="4" fill="#3cb4f3" />
<text x="353" y="347.5" font-family='"Liberation Sans",sans-serif' font-size="8.5" fill="#0d2236" font-weight="bold" textLength="9.00" lengthAdjust="spacingAndGlyphs" >All</text>
<text x="384.6" y="347.5" font-family='"Liberation Sans",sans-serif' font-size="8.5" fill="#b8bec4" textLength="18.40" lengthAdjust="spacingAndGlyphs" >Show:</text>
<rect x="406.4" y="335.7" width="101.6" height="17.1" rx="4" fill="#2b3037" />
<text x="410" y="347.5" font-family='"Liberation Sans",sans-serif' font-size="8.5" fill="#e3e7eb" font-weight="bold" textLength="34.00" lengthAdjust="spacingAndGlyphs" >Local Only</text>
<text x="451" y="347.5" font-family='"Liberation Sans",sans-serif' font-size="8.5" fill="#e3e7eb" font-weight="bold" textLength="38.00" lengthAdjust="spacingAndGlyphs" >Global Only</text>
<rect x="492" y="335.7" width="16" height="17.1" rx="4" fill="#3cb4f3" />
<text x="494.5" y="347.5" font-family='"Liberation Sans",sans-serif' font-size="8.5" fill="#0d2236" font-weight="bold" textLength="11.00" lengthAdjust="spacingAndGlyphs" >All</text>
<text x="526.5" y="347.5" font-family='"Liberation Sans",sans-serif' font-size="8.5" fill="#b8bec4" textLength="62.50" lengthAdjust="spacingAndGlyphs" >Set local properties:</text>
<rect x="592" y="335.7" width="63.6" height="17.1" rx="4" fill="#2b3037" />
<rect x="592" y="335.7" width="29.8" height="17.1" rx="4" fill="#3cb4f3" />
<text x="595" y="347.5" font-family='"Liberation Sans",sans-serif' font-size="8.5" fill="#0d2236" font-weight="bold" textLength="24.00" lengthAdjust="spacingAndGlyphs" >Locally</text>
<text x="625" y="347.5" font-family='"Liberation Sans",sans-serif' font-size="8.5" fill="#e3e7eb" font-weight="bold" textLength="27.00" lengthAdjust="spacingAndGlyphs" >Globally</text>
<rect x="155.3" y="356.4" width="167.2" height="123" rx="4" fill="#23272c" />
<rect x="155.3" y="356.4" width="167.2" height="13.2" rx="0" fill="#2d3239" />
<text x="158.9" y="365.2" font-family='"Liberation Sans",sans-serif' font-size="8.5" fill="#e3e7eb" font-weight="bold" textLength="27.10" lengthAdjust="spacingAndGlyphs" >Common</text>
<rect x="325.3" y="355.7" width="508.5" height="124" rx="4" fill="#23272c" />
<rect x="325.3" y="355.7" width="508.5" height="13.8" rx="0" fill="#2d3239" />
<text x="329" y="365.2" font-family='"Liberation Sans",sans-serif' font-size="8.5" fill="#e3e7eb" font-weight="bold" textLength="15.00" lengthAdjust="spacingAndGlyphs" >Slurs</text>
<line x1="506" y1="370" x2="506" y2="479" stroke="#1c1f23" stroke-width="1" />
<line x1="669.8" y1="370" x2="669.8" y2="479" stroke="#1c1f23" stroke-width="1" />
<rect x="159.6" y="375.8" width="11.5" height="7" rx="3.5" fill="#15181b" />
<circle cx="162.5" cy="379.3" r="3.0" fill="#46566a" stroke="none" stroke-width="1" />
<text x="174.9" y="382.4" font-family='"Liberation Sans",sans-serif' font-size="8.5" fill="#8a9198" textLength="17.00" lengthAdjust="spacingAndGlyphs" >Offset</text>
<text x="231.3" y="382.4" font-family='"Liberation Sans",sans-serif' font-size="8.7" fill="#8a9198" textLength="4.20" lengthAdjust="spacingAndGlyphs" >X</text>
<rect x="237.6" y="374.90000000000003" width="77.49999999999999" height="14.3" rx="3" fill="#1f2327" stroke="#121417" stroke-width="1.2"/>
<rect x="159.6" y="396.5" width="11.5" height="7" rx="3.5" fill="#15181b" />
<circle cx="162.5" cy="400" r="3.0" fill="#46566a" stroke="none" stroke-width="1" />
<text x="174.9" y="403.1" font-family='"Liberation Sans",sans-serif' font-size="8.5" fill="#8a9198" textLength="54.10" lengthAdjust="spacingAndGlyphs" >Suppress playback</text>
<rect x="159.6" y="409.3" width="11.5" height="7" rx="3.5" fill="#15181b" />
<circle cx="162.5" cy="412.8" r="3.0" fill="#46566a" stroke="none" stroke-width="1" />
<text x="174.9" y="415.9" font-family='"Liberation Sans",sans-serif' font-size="8.5" fill="#8a9198" textLength="14.90" lengthAdjust="spacingAndGlyphs" >Scale</text>
<rect x="237.6" y="409.3" width="73.4" height="13.699999999999989" rx="3" fill="#2e343b" />
<rect x="159.6" y="429.0" width="11.5" height="7" rx="3.5" fill="#15181b" />
<circle cx="162.5" cy="432.5" r="3.0" fill="#46566a" stroke="none" stroke-width="1" />
<text x="174.9" y="435.6" font-family='"Liberation Sans",sans-serif' font-size="8.5" fill="#8a9198" textLength="37.90" lengthAdjust="spacingAndGlyphs" >Custom scale</text>
<rect x="238.2" y="428.6" width="31.000000000000018" height="13.600000000000012" rx="3" fill="#1f2327" stroke="#121417" stroke-width="1.2"/>
<rect x="159.6" y="449.5" width="11.5" height="7" rx="3.5" fill="#15181b" />
<circle cx="162.5" cy="453" r="3.0" fill="#46566a" stroke="none" stroke-width="1" />
<text x="174.9" y="456.1" font-family='"Liberation Sans",sans-serif' font-size="8.5" fill="#8a9198" textLength="14.90" lengthAdjust="spacingAndGlyphs" >Color</text>
<rect x="330" y="375.8" width="11.5" height="7" rx="3.5" fill="#15181b" />
<circle cx="332.9" cy="379.3" r="3.0" fill="#46566a" stroke="none" stroke-width="1" />
<text x="344.8" y="382.4" font-family='"Liberation Sans",sans-serif' font-size="8.5" fill="#8a9198" textLength="29.20" lengthAdjust="spacingAndGlyphs" >Direction</text>
<rect x="407.5" y="374" width="92.0" height="17" rx="3" fill="#2e343b" />
<path d="M413,385 Q420,379 427,385" fill="none" stroke="#c8ced4" stroke-width="1" />
<path d="M436,381 Q443,387 450,381" fill="none" stroke="#c8ced4" stroke-width="1" />
<path d="M459,383 Q462.5,379 466,383 Q469.5,387 473,383" fill="none" stroke="#c8ced4" stroke-width="1" />
<path d="M482,385 Q485.5,387 489,383 Q492.5,379 496,382" fill="none" stroke="#c8ced4" stroke-width="1" />
<rect x="330" y="400.9" width="11.5" height="7" rx="3.5" fill="#15181b" />
<circle cx="332.9" cy="404.4" r="3.0" fill="#46566a" stroke="none" stroke-width="1" />
<text x="344.8" y="407.5" font-family='"Liberation Sans",sans-serif' font-size="8.5" fill="#8a9198" textLength="35.20" lengthAdjust="spacingAndGlyphs" >Start offset</text>
<text x="402.5" y="407.5" font-family='"Liberation Sans",sans-serif' font-size="8.7" fill="#8a9198" textLength="4.00" lengthAdjust="spacingAndGlyphs" >X</text>
<rect x="408.6" y="396.90000000000003" width="30.8" height="13.699999999999978" rx="3" fill="#1f2327" stroke="#121417" stroke-width="1.2"/>
<text x="449.5" y="407.5" font-family='"Liberation Sans",sans-serif' font-size="8.7" fill="#8a9198" textLength="4.00" lengthAdjust="spacingAndGlyphs" >Y</text>
<rect x="454.90000000000003" y="396.90000000000003" width="30.99999999999999" height="13.699999999999978" rx="3" fill="#1f2327" stroke="#121417" stroke-width="1.2"/>
<rect x="330" y="421.8" width="11.5" height="7" rx="3.5" fill="#15181b" />
<circle cx="332.9" cy="425.3" r="3.0" fill="#46566a" stroke="none" stroke-width="1" />
<text x="344.8" y="428.4" font-family='"Liberation Sans",sans-serif' font-size="8.5" fill="#8a9198" textLength="30.20" lengthAdjust="spacingAndGlyphs" >End offset</text>
<text x="402.5" y="428.4" font-family='"Liberation Sans",sans-serif' font-size="8.7" fill="#8a9198" textLength="4.00" lengthAdjust="spacingAndGlyphs" >X</text>
<rect x="408.6" y="418.0" width="30.8" height="13.700000000000035" rx="3" fill="#1f2327" stroke="#121417" stroke-width="1.2"/>
<text x="449.5" y="428.4" font-family='"Liberation Sans",sans-serif' font-size="8.7" fill="#8a9198" textLength="4.00" lengthAdjust="spacingAndGlyphs" >Y</text>
<rect x="454.90000000000003" y="418.0" width="30.99999999999999" height="13.700000000000035" rx="3" fill="#1f2327" stroke="#121417" stroke-width="1.2"/>
<rect x="330" y="442.5" width="11.5" height="7" rx="3.5" fill="#15181b" />
<circle cx="338.2" cy="446" r="3.0" fill="#3cb4f3" stroke="none" stroke-width="1" />
<text x="345" y="449.1" font-family='"Liberation Sans",sans-serif' font-size="8.5" fill="#e3e7eb" textLength="53.00" lengthAdjust="spacingAndGlyphs" >Start handle offset</text>
<text x="402.5" y="449.1" font-family='"Liberation Sans",sans-serif' font-size="8.7" fill="#c8ced4" textLength="4.00" lengthAdjust="spacingAndGlyphs" >X</text>
<rect x="408" y="437.6" width="32" height="15.399999999999977" rx="3" fill="#2e343b" />
<text x="412.3" y="448.3" font-family='"Liberation Sans",sans-serif' font-size="8" fill="#dfe3e7" >5/8</text>
<path d="M433,442.3 L435,440.3 L437,442.3 M433,448.3 L435,450.3 L437,448.3" fill="none" stroke="#c8ced4" stroke-width="0.9" />
<text x="449.5" y="449.1" font-family='"Liberation Sans",sans-serif' font-size="8.7" fill="#c8ced4" textLength="4.00" lengthAdjust="spacingAndGlyphs" >Y</text>
<rect x="454.3" y="437.6" width="32.19999999999999" height="15.399999999999977" rx="3" fill="#2e343b" />
<text x="458.6" y="448.3" font-family='"Liberation Sans",sans-serif' font-size="8" fill="#dfe3e7" >-3/16</text>
<path d="M479.5,442.3 L481.5,440.3 L483.5,442.3 M479.5,448.3 L481.5,450.3 L483.5,448.3" fill="none" stroke="#c8ced4" stroke-width="0.9" />
<rect x="330" y="463.5" width="11.5" height="7" rx="3.5" fill="#15181b" />
<circle cx="338.2" cy="467" r="3.0" fill="#3cb4f3" stroke="none" stroke-width="1" />
<text x="345" y="470.1" font-family='"Liberation Sans",sans-serif' font-size="8.5" fill="#e3e7eb" textLength="51.00" lengthAdjust="spacingAndGlyphs" >End handle offset</text>
<text x="402.5" y="470.1" font-family='"Liberation Sans",sans-serif' font-size="8.7" fill="#c8ced4" textLength="4.00" lengthAdjust="spacingAndGlyphs" >X</text>
<rect x="408" y="458.4" width="32" height="15.300000000000011" rx="3" fill="#2e343b" />
<text x="412.3" y="469.04999999999995" font-family='"Liberation Sans",sans-serif' font-size="8" fill="#dfe3e7" >0</text>
<path d="M433,463.04999999999995 L435,461.04999999999995 L437,463.04999999999995 M433,469.04999999999995 L435,471.04999999999995 L437,469.04999999999995" fill="none" stroke="#c8ced4" stroke-width="0.9" />
<text x="449.5" y="470.1" font-family='"Liberation Sans",sans-serif' font-size="8.7" fill="#c8ced4" textLength="4.00" lengthAdjust="spacingAndGlyphs" >Y</text>
<rect x="454.3" y="458.4" width="32.19999999999999" height="15.300000000000011" rx="3" fill="#2e343b" />
<text x="458.6" y="469.04999999999995" font-family='"Liberation Sans",sans-serif' font-size="8" fill="#dfe3e7" >-3/8</text>
<path d="M479.5,463.04999999999995 L481.5,461.04999999999995 L483.5,463.04999999999995 M479.5,469.04999999999995 L481.5,471.04999999999995 L483.5,469.04999999999995" fill="none" stroke="#c8ced4" stroke-width="0.9" />
<rect x="511.4" y="375.3" width="11.5" height="7" rx="3.5" fill="#15181b" />
<circle cx="514.3" cy="378.8" r="3.0" fill="#46566a" stroke="none" stroke-width="1" />
<text x="526.4" y="382" font-family='"Liberation Sans",sans-serif' font-size="8.5" fill="#8a9198" textLength="31.60" lengthAdjust="spacingAndGlyphs" >Number of</text>
<text x="526.4" y="391.5" font-family='"Liberation Sans",sans-serif' font-size="8.5" fill="#8a9198" textLength="28.10" lengthAdjust="spacingAndGlyphs" >segments</text>
<rect x="590.0" y="374.6" width="31.199999999999978" height="14.49999999999999" rx="3" fill="#1f2327" stroke="#121417" stroke-width="1.2"/>
<rect x="511.4" y="398.7" width="11.5" height="7" rx="3.5" fill="#15181b" />
<circle cx="514.3" cy="402.2" r="3.0" fill="#46566a" stroke="none" stroke-width="1" />
<text x="526.4" y="405.4" font-family='"Liberation Sans",sans-serif' font-size="8.5" fill="#8a9198" textLength="40.20" lengthAdjust="spacingAndGlyphs" >Tucking index</text>
<rect x="590.0" y="398.1" width="31.199999999999978" height="14.3" rx="3" fill="#1f2327" stroke="#121417" stroke-width="1.2"/>
<rect x="511.4" y="419.7" width="11.5" height="7" rx="3.5" fill="#15181b" />
<circle cx="514.3" cy="423.2" r="3.0" fill="#46566a" stroke="none" stroke-width="1" />
<text x="526.4" y="426.4" font-family='"Liberation Sans",sans-serif' font-size="8.5" fill="#8a9198" textLength="14.30" lengthAdjust="spacingAndGlyphs" >Style</text>
<rect x="589.2" y="418.8" width="73.59999999999991" height="13.0" rx="3" fill="#2e343b" />
<rect x="511.4" y="438.7" width="11.5" height="7" rx="3.5" fill="#15181b" />
<circle cx="514.3" cy="442.2" r="3.0" fill="#46566a" stroke="none" stroke-width="1" />
<text x="526.4" y="445.4" font-family='"Liberation Sans",sans-serif' font-size="8.5" fill="#8a9198" textLength="40.20" lengthAdjust="spacingAndGlyphs" >End thickness</text>
<rect x="590.0" y="438.90000000000003" width="31.199999999999978" height="13.99999999999999" rx="3" fill="#1f2327" stroke="#121417" stroke-width="1.2"/>
<text x="625" y="449.2" font-family='"Liberation Sans",sans-serif' font-size="8.5" fill="#8a9198" textLength="19.60" lengthAdjust="spacingAndGlyphs" >spaces</text>
<rect x="511.4" y="459.5" width="11.5" height="7" rx="3.5" fill="#15181b" />
<circle cx="514.3" cy="463" r="3.0" fill="#46566a" stroke="none" stroke-width="1" />
<text x="526.4" y="466.2" font-family='"Liberation Sans",sans-serif' font-size="8.5" fill="#8a9198" textLength="48.90" lengthAdjust="spacingAndGlyphs" >Middle thickness</text>
<rect x="590.0" y="459.3" width="31.199999999999978" height="14.400000000000023" rx="3" fill="#1f2327" stroke="#121417" stroke-width="1.2"/>
<text x="625" y="470.2" font-family='"Liberation Sans",sans-serif' font-size="8.5" fill="#8a9198" textLength="19.60" lengthAdjust="spacingAndGlyphs" >spaces</text>
<rect x="674" y="375.0" width="11.5" height="7" rx="3.5" fill="#15181b" />
<circle cx="676.9" cy="378.5" r="3.0" fill="#46566a" stroke="none" stroke-width="1" />
<rect x="690" y="373.9" width="9.7" height="9.3" rx="1.5" fill="#8d9298" />
<text x="703" y="381.7" font-family='"Liberation Sans",sans-serif' font-size="8.5" fill="#8a9198" textLength="44.00" lengthAdjust="spacingAndGlyphs" >Avoid collisions</text>
<rect x="674" y="388.5" width="11.5" height="7" rx="3.5" fill="#15181b" />
<circle cx="676.9" cy="392" r="3.0" fill="#46566a" stroke="none" stroke-width="1" />
<text x="689.3" y="395.2" font-family='"Liberation Sans",sans-serif' font-size="8.5" fill="#8a9198" textLength="42.70" lengthAdjust="spacingAndGlyphs" >Curvature type</text>
<rect x="752" y="387" width="45.700000000000045" height="16.69999999999999" rx="3" fill="#2e343b" />
<path d="M757,398 Q764,391 771,398" fill="none" stroke="#c8ced4" stroke-width="1" />
<path d="M780,396 L781,394 L791,394 L792,396" fill="none" stroke="#c8ced4" stroke-width="1" />
<rect x="674" y="410.0" width="11.5" height="7" rx="3.5" fill="#15181b" />
<circle cx="676.9" cy="413.5" r="3.0" fill="#46566a" stroke="none" stroke-width="1" />
<text x="689.3" y="416.7" font-family='"Liberation Sans",sans-serif' font-size="8.5" fill="#8a9198" textLength="44.20" lengthAdjust="spacingAndGlyphs" >Start pos. in tie</text>
<text x="689.3" y="425.8" font-family='"Liberation Sans",sans-serif' font-size="8.5" fill="#8a9198" textLength="15.10" lengthAdjust="spacingAndGlyphs" >chain</text>
<rect x="752" y="408.4" width="74.29999999999995" height="13.5" rx="3" fill="#2e343b" />
<text x="757" y="418.3" font-family='"Liberation Sans",sans-serif' font-size="8" fill="#c8ced4" textLength="29.00" lengthAdjust="spacingAndGlyphs" >First note</text>
<text x="794" y="418.3" font-family='"Liberation Sans",sans-serif' font-size="8" fill="#c8ced4" textLength="28.00" lengthAdjust="spacingAndGlyphs" >Last note</text>
<rect x="674" y="432.9" width="11.5" height="7" rx="3.5" fill="#15181b" />
<circle cx="676.9" cy="436.4" r="3.0" fill="#46566a" stroke="none" stroke-width="1" />
<text x="689.3" y="439.6" font-family='"Liberation Sans",sans-serif' font-size="8.5" fill="#8a9198" textLength="41.10" lengthAdjust="spacingAndGlyphs" >End pos. in tie</text>
<text x="689.3" y="448.7" font-family='"Liberation Sans",sans-serif' font-size="8.5" fill="#8a9198" textLength="15.10" lengthAdjust="spacingAndGlyphs" >chain</text>
<rect x="752" y="431.7" width="74.29999999999995" height="13.800000000000011" rx="3" fill="#2e343b" />
<text x="757" y="441.8" font-family='"Liberation Sans",sans-serif' font-size="8" fill="#c8ced4" textLength="29.00" lengthAdjust="spacingAndGlyphs" >First note</text>
<text x="794" y="441.8" font-family='"Liberation Sans",sans-serif' font-size="8" fill="#c8ced4" textLength="28.00" lengthAdjust="spacingAndGlyphs" >Last note</text>
<rect x="0" y="486.2" width="847" height="14.8" rx="0" fill="#22262b" />
<line x1="50.8" y1="486" x2="50.8" y2="501" stroke="#15181b" stroke-width="1" />
<line x1="109" y1="486" x2="109" y2="501" stroke="#15181b" stroke-width="1" />
<line x1="168.4" y1="486" x2="168.4" y2="501" stroke="#15181b" stroke-width="1" />
<text x="4" y="497.3" font-family='"Liberation Sans",sans-serif' font-size="8.2" fill="#d5dade" textLength="42.00" lengthAdjust="spacingAndGlyphs" >Concert Pitch</text>
<text x="54.5" y="497.3" font-family='"Liberation Sans",sans-serif' font-size="8.2" fill="#d5dade" textLength="15.50" lengthAdjust="spacingAndGlyphs" >Bar 2</text>
<text x="113" y="497.3" font-family='"Liberation Sans",sans-serif' font-size="8.2" fill="#d5dade" textLength="14.00" lengthAdjust="spacingAndGlyphs" >Slur</text>
<path d="M390,493 Q394,495.5 398,493" fill="none" stroke="#e0e4e8" stroke-width="1.3" />
<rect x="620.2" y="486.2" width="18.4" height="14.8" rx="0" fill="#3cb4f3" />
<rect x="625.6" y="490.5" width="8" height="7.8" rx="0" fill="none" stroke="#0d1b26" stroke-width="1.1" stroke-dasharray="1.6,1"/>
<rect x="639.8" y="486.2" width="18" height="14.8" rx="0" fill="#3a4450" />
<path d="M645.5,498.5 L644.6,494.5 Q644.3,493.2 645.3,493.6 L646.2,494.8 L646.2,490.6 Q646.8,489.6 647.4,490.6 L647.6,493 L647.7,489.8 Q648.3,488.9 648.9,489.8 L649,493 L649.2,490.4 Q649.8,489.6 650.4,490.4 L650.5,493.2 L650.8,491.4 Q651.4,490.8 651.9,491.5 L651.7,495.5 Q651.2,498.5 649.5,498.8 Z" fill="#eef1f4" stroke="none" stroke-width="1" />
<rect x="665.9" y="486.2" width="17.2" height="14.8" rx="0" fill="#3cb4f3" />
<rect x="668.8" y="492.6" width="5.6" height="3.4" rx="0.6" fill="#0d1b26" />
<rect x="675.4" y="492.6" width="5.6" height="3.4" rx="0.6" fill="#0d1b26" />
<line x1="671.6" y1="493.2" x2="671.6" y2="495.4" stroke="#9fd8f7" stroke-width="0.7" />
<line x1="678.2" y1="493.2" x2="678.2" y2="495.4" stroke="#9fd8f7" stroke-width="0.7" />
<rect x="684.3" y="486.2" width="16.2" height="14.8" rx="0" fill="#3a4450" />
<rect x="689.5" y="489.8" width="7.4" height="3.6" rx="0.5" fill="#d8dde2" />
<line x1="693.2" y1="490.3" x2="693.2" y2="492.90000000000003" stroke="#3a4450" stroke-width="0.7" />
<rect x="689.5" y="495.2" width="7.4" height="3.6" rx="0.5" fill="#d8dde2" />
<line x1="693.2" y1="495.7" x2="693.2" y2="498.3" stroke="#3a4450" stroke-width="0.7" />
<rect x="702" y="486.2" width="17" height="14.8" rx="0" fill="#3a4450" />
<rect x="704.8" y="492.3" width="3.6" height="3.6" rx="0.5" fill="#d8dde2" />
<line x1="706.5999999999999" y1="492.8" x2="706.5999999999999" y2="495.4" stroke="#3a4450" stroke-width="0.6" />
<rect x="709" y="492.3" width="3.6" height="3.6" rx="0.5" fill="#d8dde2" />
<line x1="710.8" y1="492.8" x2="710.8" y2="495.4" stroke="#3a4450" stroke-width="0.6" />
<rect x="713.2" y="492.3" width="3.6" height="3.6" rx="0.5" fill="#d8dde2" />
<line x1="715.0" y1="492.8" x2="715.0" y2="495.4" stroke="#3a4450" stroke-width="0.6" />
<rect x="720" y="486.2" width="16.7" height="14.8" rx="0" fill="#3a4450" />
<rect x="726.4" y="489.5" width="3.8" height="3.8" rx="0.5" fill="#d8dde2" />
<rect x="726.4" y="495.2" width="3.8" height="3.8" rx="0.5" fill="#d8dde2" />
<rect x="727.4" y="490.5" width="1.8" height="1.8" rx="0" fill="#3a4450" />
<rect x="727.4" y="496.2" width="1.8" height="1.8" rx="0" fill="#3a4450" />
<rect x="745.8" y="486.2" width="13.2" height="14.8" rx="0" fill="#3a4450" />
<circle cx="751.5" cy="492.5" r="2.3" fill="none" stroke="#d8dde2" stroke-width="1" />
<line x1="753.2" y1="494.2" x2="755.5" y2="496.5" stroke="#d8dde2" stroke-width="1.2" />
<rect x="759.8" y="486.2" width="45.7" height="14.8" rx="0" fill="#3a4450" />
<text x="764" y="497.3" font-family='"Liberation Sans",sans-serif' font-size="8.5" fill="#e6eaee" textLength="19.00" lengthAdjust="spacingAndGlyphs" >100%</text>
<path d="M796,492.5 L798.5,495 L801,492.5" fill="none" stroke="#d8dde2" stroke-width="1" />
<rect x="807" y="486.2" width="14.4" height="14.8" rx="0" fill="#3a4450" />
<line x1="811" y1="494" x2="817" y2="494" stroke="#e6eaee" stroke-width="1.3" />
<rect x="822" y="486.2" width="13" height="14.8" rx="0" fill="#3a4450" />
<line x1="825.5" y1="494" x2="831.5" y2="494" stroke="#e6eaee" stroke-width="1.3" />
<line x1="828.5" y1="491" x2="828.5" y2="497" stroke="#e6eaee" stroke-width="1.3" />
<circle cx="21.8" cy="25.5" r="20" fill="rgba(0,0,0,0.45)" filter="url(#blur)"/>
<circle cx="21" cy="23" r="20" fill="#c9061f" stroke="none" stroke-width="1" />
<path d="M23.3,13.2 L23.3,34 M23.3,13.2 L15.8,17.8" stroke="#fff" stroke-width="2.4" fill="none" stroke-linejoin="round"/>
<circle cx="108.8" cy="120.5" r="20" fill="rgba(0,0,0,0.45)" filter="url(#blur)"/>
<circle cx="108" cy="118" r="20" fill="#c9061f" stroke="none" stroke-width="1" />
<text x="100.4" y="128.8" font-family='"Liberation Sans",sans-serif' font-size="29.5" fill="#fff" stroke="#fff" stroke-width="0.3" textLength="15.2" lengthAdjust="spacingAndGlyphs">2</text>
<circle cx="530.8" cy="99.5" r="20" fill="rgba(0,0,0,0.45)" filter="url(#blur)"/>
<circle cx="530" cy="97" r="20" fill="#c9061f" stroke="none" stroke-width="1" />
<text x="522.4" y="107.8" font-family='"Liberation Sans",sans-serif' font-size="29.5" fill="#fff" stroke="#fff" stroke-width="0.3" textLength="15.2" lengthAdjust="spacingAndGlyphs">3</text>
<circle cx="279.8" cy="372.5" r="20" fill="rgba(0,0,0,0.45)" filter="url(#blur)"/>
<circle cx="279" cy="370" r="20" fill="#c9061f" stroke="none" stroke-width="1" />
<text x="271.4" y="380.8" font-family='"Liberation Sans",sans-serif' font-size="29.5" fill="#fff" stroke="#fff" stroke-width="0.3" textLength="15.2" lengthAdjust="spacingAndGlyphs">4</text></svg></body></html>
